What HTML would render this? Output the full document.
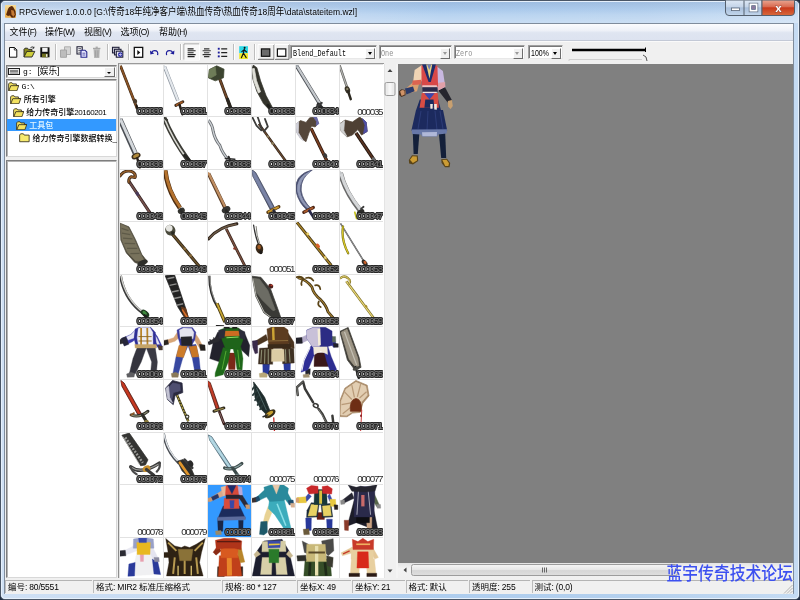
<!DOCTYPE html><html lang="zh"><head><meta charset="utf-8"><title>RPGViewer</title><style>
*{box-sizing:border-box;margin:0;padding:0}
html,body{width:800px;height:600px;overflow:hidden;background:#1e2c40}
body{will-change:transform;font-family:"Liberation Sans","Noto Sans CJK SC",sans-serif;font-size:9.4px;color:#000;position:relative}
.a{position:absolute}
#frame{left:0;top:0;width:800px;height:600px;background:linear-gradient(90deg,#cfe0f4 0%,#c3d8f1 30%,#aecdee 55%,#b4d0ee 80%,#c5dbf3 100%);border:1px solid #4a5666;border-radius:5px;}
#frame2{left:1px;top:1px;width:798px;height:598px;border:1px solid #e6f0fb;border-radius:4px}
#title{left:19px;top:5.7px;font-size:8.5px;white-space:nowrap;line-height:12px;color:#000;text-shadow:0 0 3px rgba(255,255,255,.7);transform-origin:0 78%;transform:scaleY(1.16)}
#client{left:4px;top:23px;width:790px;height:571px;background:#f0f0f0;border:1px solid #7f8c9c;border-bottom-color:#9aa7b6}
#menubar{left:5px;top:24px;width:788px;height:16.5px;background:linear-gradient(#fbfcfe 0%,#eef1f8 40%,#dfe5f1 55%,#dde3f0 100%);border-bottom:1px solid #c3c9d6}
.mi{top:26px;line-height:12px;font-size:9px;white-space:nowrap}
.mi .l{font-size:8.3px;letter-spacing:-.62px}
#toolbar{left:5px;top:41px;width:788px;height:22.5px;background:#f0f0f0;border-top:1px solid #fafafa}
.sep{top:44px;width:1px;height:16px;background:#bdbdbd;box-shadow:1px 0 0 #fff}
.combo{top:45px;height:14px;background:#fff;border:1px solid #a0a0a0;border-right-color:#e8e8e8;border-bottom-color:#e8e8e8;box-shadow:inset 1px 1px 0 #787878}
.combo .t{position:absolute;left:2.4px;top:1.5px;font-family:"Liberation Mono",monospace;font-size:8.2px;line-height:11px;white-space:nowrap;transform-origin:0 50%;transform:scaleX(.83)}
.combo .b{position:absolute;right:1px;top:2px;width:10px;height:10.5px;background:#f0f0f0;border:1px solid #fff;border-right-color:#6d6d6d;border-bottom-color:#6d6d6d}
.combo .b:after{content:"";position:absolute;left:1.5px;top:3px;border:2.6px solid transparent;border-top:3px solid #000;border-bottom:0}
.combo.dis .t{color:#8d8d8d;left:1.4px}
.combo.dis .b:after{border-top-color:#9a9a9a}
#gray{left:398px;top:64px;width:395px;height:499px;background:#808080}
.white{background:#fff;border:1px solid #828790}
#grid{left:118px;top:62.5px;width:265.5px;height:515px;background:#fff;overflow:hidden;border-top:1px solid #9a9a9a;border-left:1px solid #8e8e8e}
.cell{position:absolute;width:44px;height:52.53px;border-left:1px solid #e2e2e2;border-top:1px solid #e2e2e2;overflow:hidden}
.cell svg{position:absolute;left:0;top:0}
.lab{position:absolute;right:1.1px;bottom:0.6px;font-size:9.8px;line-height:9px;letter-spacing:-1.3px;white-space:nowrap;color:#2a2a2a}
.lab.o{right:1.5px;bottom:1px;color:#7c7c7c;text-shadow:-.8px 0 0 #262626,.8px 0 0 #262626,0 -.8px 0 #262626,0 .8px 0 #262626,-.6px -.6px 0 #262626,.6px .6px 0 #262626,.6px -.6px 0 #262626,-.6px .6px 0 #262626}
#vsb{left:383.5px;top:64px;width:12px;height:513.5px;background:#f0f0f0;border-left:1px solid #e4e4e4}
#hsb{left:398px;top:563px;width:395px;height:14px;background:linear-gradient(#e4e4e4,#f3f3f3 40%,#f0f0f0)}
#status{left:5px;top:578px;width:788px;height:16px;background:#f0f0f0}
.sp{top:579.5px;height:13.5px;line-height:12.5px;font-size:8.5px;white-space:nowrap;border-left:1px solid #bcbcbc;border-top:1px solid #b4b4b4;padding-left:2px}
.sp .l{letter-spacing:-.2px}
#wm{left:666.5px;top:560.5px;font-family:"Noto Sans CJK SC","WenQuanYi Zen Hei",sans-serif;font-weight:500;font-size:15.8px;line-height:22px;color:#3c50f0;white-space:nowrap;letter-spacing:0px;transform-origin:0 0;transform:scaleY(1.14)}
.tr{left:6.5px;height:12.9px;width:109.5px}
.tt{font-family:"Liberation Sans","Noto Sans CJK SC",sans-serif;font-weight:500;font-size:8px;line-height:12.5px;white-space:nowrap;top:1.3px}
.tt .l{letter-spacing:-.45px}
</style></head><body>
<div class="a" id="frame"></div><div class="a" id="frame2"></div><div class="a" style="left:2px;top:2px;width:796px;height:21px;background:linear-gradient(rgba(90,125,175,.22),rgba(120,160,210,.10) 35%,rgba(255,255,255,.12) 60%,rgba(255,255,255,.30))"></div>
<svg class="a" style="left:4.6px;top:5.3px" width="11.2" height="12.8" viewBox="0 0 11.2 12.8"><defs><linearGradient id="ic" x1="0" y1="0" x2="0" y2="1"><stop offset="0" stop-color="#f8dc98"/><stop offset="1" stop-color="#eaa944"/></linearGradient></defs><rect width="11.2" height="12.8" rx=".8" fill="url(#ic)"/><path d="M1.1 9.7 L3 4.1 L4.1 2.2 L6.4 1.1 L7.9 1.5 L10.5 6 L10.9 9.7 L9.7 12.4 L6.7 12.7 L4.9 10.5 L3 10.9Z" fill="#5c2a0a"/><path d="M6 5 L8.6 5.4 L9.8 9.6 L8.4 11.8 L6.6 9.6Z" fill="#c47a34"/></svg>
<div class="a" id="title">RPGViewer 1.0.0.0 [G:\传奇18年纯净客户端\热血传奇\热血传奇18周年\data\stateitem.wzl]</div>
<svg class="a" style="left:724px;top:0" width="72" height="17" viewBox="0 0 72 17"><defs><linearGradient id="gb" x1="0" y1="0" x2="0" y2="1"><stop offset="0" stop-color="#dfe9f5"/><stop offset=".45" stop-color="#c4d4e8"/><stop offset=".5" stop-color="#a9bfdb"/><stop offset="1" stop-color="#c2d6ec"/></linearGradient><linearGradient id="gr" x1="0" y1="0" x2="0" y2="1"><stop offset="0" stop-color="#e9a692"/><stop offset=".45" stop-color="#d9694f"/><stop offset=".5" stop-color="#c8391c"/><stop offset="1" stop-color="#d86a3c"/></linearGradient></defs><path d="M1.5 0 L1.5 12 Q1.5 15.5 5 15.5 L38 15.5 L38 0Z" fill="url(#gb)" stroke="#55606e" stroke-width="1"/><path d="M38 0 L38 15.5 L67 15.5 Q70.5 15.5 70.5 12 L70.5 0Z" fill="url(#gr)" stroke="#55606e" stroke-width="1"/><path d="M20 0.5 L20 15.5" stroke="#55606e" stroke-width="1"/><rect x="7.5" y="8" width="8" height="2.6" fill="#fff" stroke="#5a6678" stroke-width=".8"/><rect x="26.2" y="4.2" width="6.6" height="6.6" fill="none" stroke="#fff" stroke-width="1.8"/><rect x="25.1" y="3.1" width="8.8" height="8.8" fill="none" stroke="#5a6678" stroke-width=".6"/><rect x="27.7" y="5.7" width="3.6" height="3.6" fill="#8a7aa0" stroke="#5a6678" stroke-width=".6"/><text x="54.5" y="12" font-family="Liberation Sans,sans-serif" font-weight="bold" font-size="11.5" text-anchor="middle" fill="#fff" stroke="#6b3a3a" stroke-width=".5" paint-order="stroke">x</text></svg>
<div class="a" id="client"></div>
<div class="a" id="menubar"></div>
<div class="a mi" style="left:9.5px">文件<span class="l">(F)</span></div>
<div class="a mi" style="left:45px">操作<span class="l">(W)</span></div>
<div class="a mi" style="left:84px">视图<span class="l">(V)</span></div>
<div class="a mi" style="left:120.5px">选项<span class="l">(O)</span></div>
<div class="a mi" style="left:159px">帮助<span class="l">(H)</span></div>
<div class="a" id="toolbar"></div>
<svg class="a" style="left:0;top:40px" width="300" height="24" viewBox="0 40 300 24"><path d="M9.5 47.5 L14.5 47.5 L16.8 49.8 L16.8 57.2 L9.5 57.2Z" fill="#fff" stroke="#111" stroke-width="1"/><path d="M14.3 47.6 L14.3 50 L16.7 50" fill="none" stroke="#111" stroke-width=".8"/><path d="M24 57 L24 49.2 L25 48.2 L27.5 48.2 L28.5 49.4 L32 49.4 L32 51.2" fill="#8a8a1c" stroke="#222" stroke-width=".9"/><path d="M24 57 L26.8 51.4 L34.8 51.4 L32 57Z" fill="#cfcf3c" stroke="#222" stroke-width=".9"/><path d="M30.5 47.6 Q32.5 46 33.8 47.8 M33.9 46.6 L33.9 48.2 L32.4 48.2" fill="none" stroke="#111" stroke-width=".8"/><rect x="40.3" y="47.3" width="9.2" height="10" fill="#111"/><rect x="42.2" y="47.8" width="5.4" height="4" fill="#f4f4f4"/><rect x="42" y="53.6" width="5.8" height="3.7" fill="#6f6f1e"/><rect x="46" y="54.2" width="1.4" height="2.6" fill="#eee"/><path d="M64.5 46.8 L70.5 46.8 L70.5 54.5 L64.5 54.5Z" fill="#d4d4d4" stroke="#a8a8a8" stroke-width=".9"/><path d="M60.5 50 L66.5 50 L66.5 57.3 L60.5 57.3Z" fill="#bdbdbd" stroke="#a2a2a2" stroke-width=".9"/><path d="M77 46.8 L82.2 46.8 L82.2 54 L77 54Z" fill="#fff" stroke="#1a1a30" stroke-width="1.1"/><path d="M78.3 48.6 L81 48.6 M78.3 50.4 L81 50.4 M78.3 52.2 L81 52.2" stroke="#1a1a30" stroke-width=".7"/><path d="M81 50.2 L85 50.2 L86.8 52 L86.8 57.3 L81 57.3Z" fill="#e8e8ff" stroke="#26268c" stroke-width="1.1"/><path d="M82.4 53.2 L85.4 53.2 M82.4 55 L85.4 55" stroke="#26268c" stroke-width=".7"/><path d="M93.6 49.2 L99.8 49.2 L99.3 58 L94.1 58Z" fill="#b4b4b4"/><rect x="93" y="47.8" width="7.4" height="1.4" fill="#a6a6a6"/><rect x="95.6" y="46.6" width="2.2" height="1.3" fill="#a6a6a6"/><path d="M95.4 50.5 L95.6 57 M97.9 50.5 L97.8 57" stroke="#999" stroke-width=".7"/><rect x="112.5" y="47.3" width="6.5" height="5.6" fill="#cfcfd8" stroke="#20203a" stroke-width="1.1"/><rect x="114.5" y="49.3" width="6.5" height="5.6" fill="#dcdce6" stroke="#20203a" stroke-width="1.1"/><rect x="116.3" y="51.2" width="6.5" height="6" fill="#e8e8f4" stroke="#20203a" stroke-width="1.1"/><circle cx="120.2" cy="54.6" r="2.3" fill="#2a2aa8"/><path d="M118.8 54.6 L121.2 54.6 M120.3 53.6 L121.4 54.6 L120.3 55.6" stroke="#fff" stroke-width=".7" fill="none"/><rect x="134.3" y="47.4" width="8.4" height="9.9" fill="#fff" stroke="#111" stroke-width="1.3"/><path d="M137.3 49.9 L140.3 52.4 L137.3 54.9Z" fill="#111"/><path d="M157.6 55.2 Q158.6 50.6 154.6 50.6 Q152.6 50.6 151.8 52.4" fill="none" stroke="#1c1c9a" stroke-width="1.2"/><path d="M150 50.6 L150.4 54.6 L154.2 53.6Z" fill="#1c1c9a"/><path d="M166.6 55.2 Q165.6 50.6 169.6 50.6 Q171.6 50.6 172.6 52.4" fill="none" stroke="#1c1c9a" stroke-width="1.2"/><path d="M174.4 50.6 L174 54.6 L170.2 53.6Z" fill="#1c1c9a"/><path d="M184 59.5 L184 44 L199 44" fill="none" stroke="#9a9a9a" stroke-width="1"/><path d="M184.5 60 L199.5 60 L199.5 44.5" fill="none" stroke="#fff" stroke-width="1"/><rect x="184.5" y="44.5" width="14.5" height="15" fill="#f8f8f8"/><path d="M187.6 48.9 L193.6 48.9 M187.6 50.8 L195.6 50.8 M187.6 52.7 L193.6 52.7 M187.6 54.6 L195.6 54.6 M187.6 56.6 L194.6 56.6" stroke="#222" stroke-width="1.1"/><path d="M204 48.9 L209.4 48.9 M202.6 50.8 L210.8 50.8 M204 52.7 L209.4 52.7 M202.6 54.6 L210.8 54.6 M204 56.6 L209.4 56.6" stroke="#333" stroke-width="1.1"/><rect x="217.8" y="47.8" width="1.9" height="1.9" fill="#1c1c9a"/><rect x="217.8" y="51.6" width="1.9" height="1.9" fill="#1c1c9a"/><rect x="217.8" y="55.4" width="1.9" height="1.9" fill="#1c1c9a"/><path d="M221.2 48.8 L227.2 48.8 M221.2 52.6 L227.2 52.6 M221.2 56.4 L227.2 56.4" stroke="#222" stroke-width="1.2"/><rect x="239.2" y="46.2" width="8.8" height="7" fill="#2cd8e6"/><rect x="239.2" y="53.2" width="8.8" height="5.8" fill="#f0e92c"/><circle cx="244.6" cy="47.8" r="1" fill="#111"/><path d="M244.4 48.8 L243.4 53 L241.4 57.8 M243.4 53 L246.2 57.6 M244.2 49.8 L241.8 51.6 M244.2 49.8 L246.6 52" stroke="#111" stroke-width="1.1" fill="none" stroke-linecap="round"/><path d="M258 59.3 L274 59.3 L274 44.5" fill="none" stroke="#6a6a6a" stroke-width="1"/><path d="M258 59 L258 44.5 L274 44.5" fill="none" stroke="#fff" stroke-width="1"/><rect x="261.4" y="48.9" width="8.4" height="7.4" fill="#6b6b6b" stroke="#111" stroke-width="1.2"/><path d="M275 59.3 L289 59.3 L289 44.5" fill="none" stroke="#6a6a6a" stroke-width="1"/><path d="M275 59 L275 44.5 L289 44.5" fill="none" stroke="#fff" stroke-width="1"/><rect x="277.4" y="48.9" width="8.4" height="7.4" fill="#fff" stroke="#111" stroke-width="1.2"/></svg>
<div class="a sep" style="left:55px"></div>
<div class="a sep" style="left:107px"></div>
<div class="a sep" style="left:127.5px"></div>
<div class="a sep" style="left:180px"></div>
<div class="a sep" style="left:233px"></div>
<div class="a sep" style="left:254px"></div>
<div class="a combo" style="left:290px;width:87px"><span class="t">Blend_Default</span><span class="b"></span></div>
<div class="a combo dis" style="left:379px;width:73px"><span class="t">One</span><span class="b"></span></div>
<div class="a combo dis" style="left:453.5px;width:71px"><span class="t">Zero</span><span class="b"></span></div>
<div class="a combo" style="left:527.5px;width:35px"><span class="t" style="left:2px;font-family:'Liberation Sans',sans-serif;font-size:9.2px;transform:scaleX(.76)">100%</span><span class="b"></span></div>
<svg class="a" style="left:566px;top:44px" width="90" height="20" viewBox="0 0 90 20"><path d="M6 6 L79.5 6" stroke="#000" stroke-width="2.4"/><path d="M79.5 3.5 L79.5 8" stroke="#000" stroke-width="1"/><path d="M3 17 L3 15.5 L76 15.5" stroke="#d0d0d0" stroke-width="1" fill="none"/><path d="M77 11 Q81 12 81 17" stroke="#555" stroke-width="1" fill="none"/></svg>
<div class="a white" style="left:5.5px;top:65px;width:111px;height:13px;border-color:#7e7e7e #d8d8d8 #d8d8d8 #7e7e7e;box-shadow:inset 1px 1px 0 #b4b4b4"></div>
<svg class="a" style="left:8px;top:67px" width="14" height="9" viewBox="0 0 14 9"><rect x=".5" y="1.5" width="11" height="6" fill="#e8e8e8" stroke="#222" stroke-width="1"/><path d="M2 4 L10 4" stroke="#222" stroke-width="1"/><path d="M2 6 L10 6" stroke="#777" stroke-width="1"/></svg>
<div class="a" style="left:23px;top:66px;font-size:8.6px;line-height:11px;white-space:nowrap"><span style="font-family:'Liberation Mono',monospace;font-size:8px">g: </span>[娱乐]</div>
<div class="a" style="left:104px;top:67px;width:10.5px;height:10px;background:#f0f0f0;border:1px solid #fff;border-right-color:#6d6d6d;border-bottom-color:#6d6d6d"></div>
<div class="a" style="left:107px;top:71.5px;border:2.2px solid transparent;border-top:2.6px solid #000;border-bottom:0"></div>
<div class="a white" style="left:5.5px;top:78.5px;width:111.5px;height:78px;border-color:#7e7e7e #d8d8d8 #d8d8d8 #7e7e7e;box-shadow:inset 1px 1px 0 #b4b4b4"></div>
<div class="a tr" style="top:79.8px;"><svg class="a" style="left:1.3px;top:2px" width="11.4" height="9.6" viewBox="0 0 13 11"><path d="M0.7 2.2 L1.8 0.9 L4.6 0.9 L5.6 2.2 L9.6 2.2 L9.6 4 L12.3 4 L10.2 10 L0.7 10 Z" fill="#f3e260" stroke="#3a3420" stroke-width="1"/><path d="M0.9 10 L3.2 4.2 L12.2 4.2" fill="none" stroke="#3a3420" stroke-width="1"/></svg><div class="a tt" style="left:14.9px;font-family:Liberation Mono,monospace;font-size:8px;"><span class="l">G:\</span></div></div>
<div class="a tr" style="top:92.7px;"><svg class="a" style="left:3.7px;top:2px" width="11.4" height="9.6" viewBox="0 0 13 11"><path d="M0.7 2.2 L1.8 0.9 L4.6 0.9 L5.6 2.2 L9.6 2.2 L9.6 4 L12.3 4 L10.2 10 L0.7 10 Z" fill="#f3e260" stroke="#3a3420" stroke-width="1"/><path d="M0.9 10 L3.2 4.2 L12.2 4.2" fill="none" stroke="#3a3420" stroke-width="1"/></svg><div class="a tt" style="left:17.3px;">所有引擎</div></div>
<div class="a tr" style="top:105.6px;"><svg class="a" style="left:6.1px;top:2px" width="11.4" height="9.6" viewBox="0 0 13 11"><path d="M0.7 2.2 L1.8 0.9 L4.6 0.9 L5.6 2.2 L9.6 2.2 L9.6 4 L12.3 4 L10.2 10 L0.7 10 Z" fill="#f3e260" stroke="#3a3420" stroke-width="1"/><path d="M0.9 10 L3.2 4.2 L12.2 4.2" fill="none" stroke="#3a3420" stroke-width="1"/></svg><div class="a tt" style="left:19.7px;">给力传奇引擎<span class="l">20160201</span></div></div>
<div class="a tr" style="top:118.5px;background:#3399ff;"><svg class="a" style="left:9.1px;top:2px" width="11.4" height="9.6" viewBox="0 0 13 11"><path d="M0.7 2.2 L1.8 0.9 L4.6 0.9 L5.6 2.2 L9.6 2.2 L9.6 4 L12.3 4 L10.2 10 L0.7 10 Z" fill="#f3e260" stroke="#3a3420" stroke-width="1"/><path d="M0.9 10 L3.2 4.2 L12.2 4.2" fill="none" stroke="#3a3420" stroke-width="1"/></svg><div class="a tt" style="left:22.7px;color:#e4f6ff;">工具包</div></div>
<div class="a tr" style="top:131.4px;"><svg class="a" style="left:12.5px;top:2px" width="11.4" height="9.6" viewBox="0 0 13 11"><path d="M0.7 2.4 L1.8 0.9 L5 0.9 L6 2.4 L11.6 2.4 L11.6 10 L0.7 10 Z" fill="#f6ea6e" stroke="#3a3420" stroke-width="1"/></svg><div class="a tt" style="left:26.1px;">给力传奇引擎数据转换<span class="l">_</span></div></div>
<div class="a white" style="left:5.5px;top:159.5px;width:111.5px;height:418px;border-color:#7e7e7e #d8d8d8 #d8d8d8 #7e7e7e;box-shadow:inset 1px 1px 0 #b4b4b4"></div>
<div class="a" id="grid">
<div class="cell" style="left:0.30px;top:0.30px;">
<svg width="44.0" height="52.53" viewBox="0 0 240.0 286.5" style="left:-1px;top:-1px"><path d="M8 10 L100 245" stroke="#3a2412" stroke-width="14.9" stroke-linecap="butt" fill="none"/><path d="M8 10 L100 245" stroke="#8a5426" stroke-width="9.5" stroke-linecap="butt" fill="none"/><ellipse cx="88" cy="203" rx="11" ry="13" fill="#4a3c2c" transform="rotate(-20 88 203)"/><path d="M95 225 L104 256" stroke="#1e1812" stroke-width="10.8" stroke-linecap="round" fill="none"/></svg>
<span class="lab o">000030</span>
</div>
<div class="cell" style="left:44.30px;top:0.30px;">
<svg width="44.0" height="52.53" viewBox="0 0 240.0 286.5" style="left:-1px;top:-1px"><path d="M8 15 L81 200" stroke="#8e96a0" stroke-width="18.9" stroke-linecap="butt" fill="none"/><path d="M9 15 L82 200" stroke="#e4e8ec" stroke-width="12.2" stroke-linecap="butt" fill="none"/><path d="M2 5 L14 14 L4 20Z" fill="#cfd4da" stroke="#cfd4da" stroke-width="4" stroke-linejoin="round"/><path d="M70 226 L108 206" stroke="#3a2a1c" stroke-width="16.2" stroke-linecap="round" fill="none"/><path d="M74 224 L104 208" stroke="#a45a24" stroke-width="9.5" stroke-linecap="round" fill="none"/><path d="M90 222 L106 274" stroke="#2a2018" stroke-width="13.5" stroke-linecap="round" fill="none"/></svg>
<span class="lab o">000031</span>
</div>
<div class="cell" style="left:88.30px;top:0.30px;">
<svg width="44.0" height="52.53" viewBox="0 0 240.0 286.5" style="left:-1px;top:-1px"><path d="M68 78 L128 240" stroke="#2e2014" stroke-width="16.2" stroke-linecap="butt" fill="none"/><path d="M68 78 L128 240" stroke="#74492a" stroke-width="9.5" stroke-linecap="butt" fill="none"/><path d="M13 30 L53 10 L93 28 L90 75 L45 92 L8 76Z" fill="#3c4430" stroke="#3c4430" stroke-width="4" stroke-linejoin="round"/><path d="M13 32 L45 16 L50 60 L20 76 L9 72Z" fill="#6e7c58" stroke="#6e7c58" stroke-width="4" stroke-linejoin="round"/><path d="M112 192 L133 248" stroke="#2a2620" stroke-width="17.6" stroke-linecap="round" fill="none"/></svg>
<span class="lab o">000032</span>
</div>
<div class="cell" style="left:132.30px;top:0.30px;">
<svg width="44.0" height="52.53" viewBox="0 0 240.0 286.5" style="left:-1px;top:-1px"><path d="M12 6 L32 20 L52 92 L82 172 L116 236 L104 254 L68 216 L32 150 L10 82 L5 30Z" fill="#34342c" stroke="#34342c" stroke-width="4" stroke-linejoin="round"/><path d="M7 26 L18 24 L30 90 L52 152 L40 158 L14 90Z" fill="#e0e0d8" stroke="#e0e0d8" stroke-width="4" stroke-linejoin="round"/><path d="M92 225 L120 262" stroke="#1e1e1a" stroke-width="16.2" stroke-linecap="round" fill="none"/></svg>
<span class="lab o">000033</span>
</div>
<div class="cell" style="left:176.30px;top:0.30px;">
<svg width="44.0" height="52.53" viewBox="0 0 240.0 286.5" style="left:-1px;top:-1px"><path d="M8 10 L140 225" stroke="#4a4e54" stroke-width="20.2" stroke-linecap="butt" fill="none"/><path d="M9 9 L140 223" stroke="#c4c8cc" stroke-width="12.2" stroke-linecap="butt" fill="none"/><path d="M2 0 L16 10 L4 18Z" fill="#9aa0a6" stroke="#9aa0a6" stroke-width="4" stroke-linejoin="round"/><path d="M128 222 L156 252" stroke="#2c2c2c" stroke-width="21.6" stroke-linecap="round" fill="none"/><path d="M118 232 L146 212" stroke="#3a3a3a" stroke-width="10.8" stroke-linecap="round" fill="none"/></svg>
<span class="lab o">000034</span>
</div>
<div class="cell" style="left:220.30px;top:0.30px;">
<svg width="44.0" height="52.53" viewBox="0 0 240.0 286.5" style="left:-1px;top:-1px"><path d="M3 8 L42 122" stroke="#5a5a58" stroke-width="13.5" stroke-linecap="butt" fill="none"/><path d="M3 8 L42 122" stroke="#b4b4b0" stroke-width="6.8" stroke-linecap="butt" fill="none"/><ellipse cx="46" cy="140" rx="14" ry="20" fill="#3a3428" transform="rotate(-20 46 140)"/><ellipse cx="45" cy="136" rx="6" ry="7" fill="#8a8468"/><path d="M50 150 L64 192" stroke="#2c2820" stroke-width="13.5" stroke-linecap="round" fill="none"/></svg>
<span class="lab">000035</span>
</div>
<div class="cell" style="left:0.30px;top:52.83px;">
<svg width="44.0" height="52.53" viewBox="0 0 240.0 286.5" style="left:-1px;top:-1px"><path d="M5 18 L88 203" stroke="#4a4e54" stroke-width="28.4" stroke-linecap="butt" fill="none"/><path d="M8 18 L91 203" stroke="#d4d8dc" stroke-width="16.2" stroke-linecap="butt" fill="none"/><path d="M0 8 L14 16 L2 26Z" fill="#b0b4b8" stroke="#b0b4b8" stroke-width="4" stroke-linejoin="round"/><ellipse cx="93" cy="218" rx="26" ry="16" fill="#3a2c1c" transform="rotate(-25 93 218)"/><ellipse cx="93" cy="217" rx="18" ry="9" fill="#b08a3c" transform="rotate(-25 93 217)"/><path d="M100 232 L114 280" stroke="#2a2018" stroke-width="13.5" stroke-linecap="round" fill="none"/></svg>
<span class="lab o">000036</span>
</div>
<div class="cell" style="left:44.30px;top:52.83px;">
<svg width="44.0" height="52.53" viewBox="0 0 240.0 286.5" style="left:-1px;top:-1px"><path d="M6 10 Q50 120 140 245" stroke="#3c3c36" stroke-width="25.7" stroke-linecap="butt" stroke-linejoin="round" fill="none"/><path d="M8 14 Q50 122 132 236" stroke="#d8d8d2" stroke-width="8.1" stroke-linecap="butt" stroke-linejoin="round" fill="none"/><path d="M4 8 L22 22" stroke="#3c3c36" stroke-width="12.2" stroke-linecap="round" stroke-linejoin="round" fill="none"/><path d="M118 215 L150 250" stroke="#262622" stroke-width="17.6" stroke-linecap="round" fill="none"/></svg>
<span class="lab o">000037</span>
</div>
<div class="cell" style="left:88.30px;top:52.83px;">
<svg width="44.0" height="52.53" viewBox="0 0 240.0 286.5" style="left:-1px;top:-1px"><path d="M8 23 Q30 50 34 85 Q44 130 70 160 Q82 200 122 246" stroke="#6a6e72" stroke-width="16.2" stroke-linecap="butt" stroke-linejoin="round" fill="none"/><path d="M8 23 Q30 50 34 85 Q44 130 70 160 Q82 200 122 246" stroke="#d0d4d8" stroke-width="6.8" stroke-linecap="butt" stroke-linejoin="round" fill="none"/><path d="M100 232 L152 236" stroke="#2a2a2a" stroke-width="8.1" stroke-linecap="round" fill="none"/><path d="M118 222 L134 262" stroke="#2a2a2a" stroke-width="10.8" stroke-linecap="round" fill="none"/></svg>
<span class="lab o">000038</span>
</div>
<div class="cell" style="left:132.30px;top:52.83px;">
<svg width="44.0" height="52.53" viewBox="0 0 240.0 286.5" style="left:-1px;top:-1px"><path d="M43 43 L198 258" stroke="#2a1e16" stroke-width="13.5" stroke-linecap="butt" fill="none"/><path d="M43 43 L198 258" stroke="#6a4a30" stroke-width="6.8" stroke-linecap="butt" fill="none"/><path d="M8 8 L30 52 L56 78" stroke="#3c3c3a" stroke-width="9.5" stroke-linecap="round" stroke-linejoin="round" fill="none"/><path d="M36 4 L60 72" stroke="#3c3c3a" stroke-width="9.5" stroke-linecap="round" stroke-linejoin="round" fill="none"/><path d="M76 16 L92 58 L70 84" stroke="#3c3c3a" stroke-width="9.5" stroke-linecap="round" stroke-linejoin="round" fill="none"/><ellipse cx="118" cy="150" rx="8" ry="8" fill="#8a7a5a"/><ellipse cx="92" cy="112" rx="7" ry="7" fill="#8a7a5a"/></svg>
<span class="lab o">000039</span>
</div>
<div class="cell" style="left:176.30px;top:52.83px;">
<svg width="44.0" height="52.53" viewBox="0 0 240.0 286.5" style="left:-1px;top:-1px"><path d="M88 68 L173 243" stroke="#2a140c" stroke-width="17.6" stroke-linecap="butt" fill="none"/><path d="M88 68 L173 243" stroke="#7a4022" stroke-width="9.5" stroke-linecap="butt" fill="none"/><path d="M5 45 L30 25 L60 35 L80 10 L115 5 L128 40 L110 60 L90 55 L75 95 L60 140 L30 120 L10 90Z" fill="#54463a" stroke="#54463a" stroke-width="4" stroke-linejoin="round"/><path d="M3 45 L20 32 L18 90 L45 135 L28 122 L8 90Z" fill="#d0d0d8" stroke="#d0d0d8" stroke-width="4" stroke-linejoin="round"/><path d="M100 5 L118 6 L130 42 L116 52 L118 30Z" fill="#6a6aa8" stroke="#6a6aa8" stroke-width="4" stroke-linejoin="round"/><ellipse cx="165" cy="215" rx="14" ry="10" fill="#3a3a3a" transform="rotate(60 165 215)"/></svg>
<span class="lab o">000040</span>
</div>
<div class="cell" style="left:220.30px;top:52.83px;">
<svg width="44.0" height="52.53" viewBox="0 0 240.0 286.5" style="left:-1px;top:-1px"><path d="M93 93 L213 273" stroke="#1e140e" stroke-width="18.9" stroke-linecap="butt" fill="none"/><path d="M93 93 L213 273" stroke="#5a3422" stroke-width="9.5" stroke-linecap="butt" fill="none"/><path d="M3 43 L33 22 L73 33 L113 6 L148 33 L154 84 L123 104 L103 74 L73 104 L43 114 L12 84Z" fill="#4e4034" stroke="#4e4034" stroke-width="4" stroke-linejoin="round"/><path d="M3 45 L30 26 L26 80 L43 112 L12 84Z" fill="#d0d0d0" stroke="#d0d0d0" stroke-width="4" stroke-linejoin="round"/><path d="M128 14 L148 33 L154 84 L134 96 L142 50Z" fill="#4e4ea4" stroke="#4e4ea4" stroke-width="4" stroke-linejoin="round"/><ellipse cx="190" cy="238" rx="14" ry="9" fill="#6a6a6a" transform="rotate(55 190 238)"/></svg>
<span class="lab o">000041</span>
</div>
<div class="cell" style="left:0.30px;top:105.36px;">
<svg width="44.0" height="52.53" viewBox="0 0 240.0 286.5" style="left:-1px;top:-1px"><path d="M53 65 L173 245" stroke="#2c1c1c" stroke-width="16.2" stroke-linecap="butt" fill="none"/><path d="M53 65 L173 245" stroke="#74504c" stroke-width="9.5" stroke-linecap="butt" fill="none"/><path d="M6 38 Q26 6 64 12 Q94 22 88 46 L66 42 Q50 52 54 72" stroke="#3a2414" stroke-width="16.2" stroke-linecap="round" stroke-linejoin="round" fill="none"/><path d="M6 38 Q26 6 64 12 Q94 22 88 46 L66 42 Q50 52 54 72" stroke="#96602c" stroke-width="8.1" stroke-linecap="round" stroke-linejoin="round" fill="none"/><ellipse cx="100" cy="135" rx="9" ry="12" fill="#4a3a5a" transform="rotate(-30 100 135)"/></svg>
<span class="lab o">000042</span>
</div>
<div class="cell" style="left:44.30px;top:105.36px;">
<svg width="44.0" height="52.53" viewBox="0 0 240.0 286.5" style="left:-1px;top:-1px"><path d="M12 8 Q22 112 92 212" stroke="#4e2e12" stroke-width="25.7" stroke-linecap="butt" stroke-linejoin="round" fill="none"/><path d="M14 8 Q24 112 94 210" stroke="#b4722e" stroke-width="16.2" stroke-linecap="butt" stroke-linejoin="round" fill="none"/><ellipse cx="100" cy="228" rx="20" ry="16" fill="#34342f" transform="rotate(-30 100 228)"/><path d="M98 226 L116 262" stroke="#2a2a28" stroke-width="13.5" stroke-linecap="round" fill="none"/></svg>
<span class="lab o">000043</span>
</div>
<div class="cell" style="left:88.30px;top:105.36px;">
<svg width="44.0" height="52.53" viewBox="0 0 240.0 286.5" style="left:-1px;top:-1px"><path d="M8 25 L100 215" stroke="#5a3c24" stroke-width="20.2" stroke-linecap="butt" fill="none"/><path d="M10 25 L102 214" stroke="#c08e62" stroke-width="12.2" stroke-linecap="butt" fill="none"/><path d="M0 14 L16 24 L4 34Z" fill="#c08e62" stroke="#c08e62" stroke-width="4" stroke-linejoin="round"/><ellipse cx="104" cy="222" rx="25" ry="17" fill="#343432" transform="rotate(-30 104 222)"/><path d="M104 226 L122 254" stroke="#262624" stroke-width="13.5" stroke-linecap="round" fill="none"/></svg>
<span class="lab o">000044</span>
</div>
<div class="cell" style="left:132.30px;top:105.36px;">
<svg width="44.0" height="52.53" viewBox="0 0 240.0 286.5" style="left:-1px;top:-1px"><path d="M6 4 L26 20 L126 206 L104 220 L10 40Z" fill="#3c4258" stroke="#3c4258" stroke-width="4" stroke-linejoin="round"/><path d="M8 10 L22 22 L120 206 L108 214 L14 42Z" fill="#7a84a6" stroke="#7a84a6" stroke-width="4" stroke-linejoin="round"/><path d="M92 236 L152 206" stroke="#5a3c14" stroke-width="17.6" stroke-linecap="round" fill="none"/><path d="M96 234 L148 208" stroke="#c8962e" stroke-width="9.5" stroke-linecap="round" fill="none"/><path d="M124 226 L142 262" stroke="#2a2a3a" stroke-width="14.9" stroke-linecap="round" fill="none"/></svg>
<span class="lab o">000045</span>
</div>
<div class="cell" style="left:176.30px;top:105.36px;">
<svg width="44.0" height="52.53" viewBox="0 0 240.0 286.5" style="left:-1px;top:-1px"><path d="M96 4 Q-10 30 6 124 Q22 190 70 228 L86 214 Q42 170 34 120 Q26 50 96 4Z" fill="#4a5070" stroke="#4a5070" stroke-width="4" stroke-linejoin="round"/><path d="M84 14 Q6 44 14 122 Q28 184 74 218 L78 212 Q34 170 26 120 Q20 56 84 14Z" fill="#929ab8" stroke="#929ab8" stroke-width="4" stroke-linejoin="round"/><path d="M48 236 L100 210" stroke="#4a2414" stroke-width="17.6" stroke-linecap="round" fill="none"/><path d="M52 234 L96 212" stroke="#a85a2c" stroke-width="9.5" stroke-linecap="round" fill="none"/><path d="M78 228 L104 268" stroke="#2a2a4a" stroke-width="14.9" stroke-linecap="round" fill="none"/></svg>
<span class="lab o">000046</span>
</div>
<div class="cell" style="left:220.30px;top:105.36px;">
<svg width="44.0" height="52.53" viewBox="0 0 240.0 286.5" style="left:-1px;top:-1px"><path d="M8 20 Q30 120 118 230" stroke="#6a6a6a" stroke-width="27.0" stroke-linecap="butt" stroke-linejoin="round" fill="none"/><path d="M10 20 Q34 120 120 226" stroke="#d4d6d8" stroke-width="17.6" stroke-linecap="butt" stroke-linejoin="round" fill="none"/><path d="M0 8 L18 22 L4 30Z" fill="#c4c6c8" stroke="#c4c6c8" stroke-width="4" stroke-linejoin="round"/><ellipse cx="118" cy="236" rx="22" ry="14" fill="#2c2c2a" transform="rotate(-30 118 236)"/><path d="M86 236 L96 270" stroke="#c8c424" stroke-width="9.5" stroke-linecap="round" fill="none"/><path d="M120 218 L134 206" stroke="#3a3a3a" stroke-width="9.5" stroke-linecap="round" fill="none"/></svg>
<span class="lab o">000047</span>
</div>
<div class="cell" style="left:0.30px;top:157.89px;">
<svg width="44.0" height="52.53" viewBox="0 0 240.0 286.5" style="left:-1px;top:-1px"><path d="M6 12 L54 32 L90 102 L124 182 L156 224 L134 242 L86 226 L40 174 L10 104Z" fill="#4e4a3c" stroke="#4e4a3c" stroke-width="4" stroke-linejoin="round"/><path d="M10 18 L50 36 L84 104 L118 182 L140 220 L90 216 L46 170 L16 104Z" fill="#78725c" stroke="#78725c" stroke-width="4" stroke-linejoin="round"/><path d="M14 40 L52 52 M16 66 L62 74 M22 94 L74 98 M30 122 L88 124 M44 150 L100 150 M62 178 L112 176" stroke="#5e5a48" stroke-width="6.8" stroke-linecap="butt" stroke-linejoin="round" fill="none"/><ellipse cx="128" cy="228" rx="30" ry="14" fill="#2e2e2a" transform="rotate(-25 128 228)"/></svg>
<span class="lab o">000048</span>
</div>
<div class="cell" style="left:44.30px;top:157.89px;">
<svg width="44.0" height="52.53" viewBox="0 0 240.0 286.5" style="left:-1px;top:-1px"><path d="M48 68 L198 248" stroke="#2a2012" stroke-width="17.6" stroke-linecap="butt" fill="none"/><path d="M48 68 L198 248" stroke="#6a522c" stroke-width="9.5" stroke-linecap="butt" fill="none"/><ellipse cx="40" cy="50" rx="27" ry="30" fill="#4a4a3c" transform="rotate(-30 40 50)"/><ellipse cx="34" cy="40" rx="18" ry="18" fill="#e4e4e0"/><ellipse cx="54" cy="66" rx="10" ry="10" fill="#2a2a22"/><ellipse cx="118" cy="152" rx="8" ry="8" fill="#8a6a3a"/><ellipse cx="150" cy="190" rx="8" ry="8" fill="#8a6a3a"/></svg>
<span class="lab o">000049</span>
</div>
<div class="cell" style="left:88.30px;top:157.89px;">
<svg width="44.0" height="52.53" viewBox="0 0 240.0 286.5" style="left:-1px;top:-1px"><path d="M105 43 L208 248" stroke="#2e1e16" stroke-width="14.9" stroke-linecap="butt" fill="none"/><path d="M105 43 L208 248" stroke="#7a5040" stroke-width="8.1" stroke-linecap="butt" fill="none"/><path d="M8 98 Q66 30 163 15" stroke="#2e241c" stroke-width="16.2" stroke-linecap="round" stroke-linejoin="round" fill="none"/><path d="M12 94 Q68 32 158 18" stroke="#6e5a46" stroke-width="8.1" stroke-linecap="round" stroke-linejoin="round" fill="none"/><ellipse cx="150" cy="150" rx="7" ry="7" fill="#8a3a2a"/></svg>
<span class="lab o">000050</span>
</div>
<div class="cell" style="left:132.30px;top:157.89px;">
<svg width="44.0" height="52.53" viewBox="0 0 240.0 286.5" style="left:-1px;top:-1px"><path d="M14 22 Q22 80 42 132" stroke="#2e2e2e" stroke-width="6.8" stroke-linecap="round" stroke-linejoin="round" fill="none"/><path d="M28 30 Q30 80 46 120" stroke="#55554c" stroke-width="4.1" stroke-linecap="round" stroke-linejoin="round" fill="none"/><ellipse cx="46" cy="150" rx="20" ry="28" fill="#3a2a1a" transform="rotate(-15 46 150)"/><ellipse cx="44" cy="142" rx="10" ry="12" fill="#a05a24" transform="rotate(-15 44 142)"/><ellipse cx="54" cy="170" rx="9" ry="11" fill="#1e1a16"/></svg>
<span class="lab">000051</span>
</div>
<div class="cell" style="left:176.30px;top:157.89px;">
<svg width="44.0" height="52.53" viewBox="0 0 240.0 286.5" style="left:-1px;top:-1px"><path d="M11 8 L198 243" stroke="#3a2c10" stroke-width="16.2" stroke-linecap="butt" fill="none"/><path d="M11 8 L198 243" stroke="#a88428" stroke-width="8.1" stroke-linecap="butt" fill="none"/><ellipse cx="125" cy="135" rx="14" ry="9" fill="#d8602a" transform="rotate(50 125 135)"/><ellipse cx="70" cy="70" rx="9" ry="7" fill="#e8d070" transform="rotate(50 70 70)"/><ellipse cx="165" cy="200" rx="9" ry="7" fill="#e8d070" transform="rotate(50 165 200)"/></svg>
<span class="lab o">000052</span>
</div>
<div class="cell" style="left:220.30px;top:157.89px;">
<svg width="44.0" height="52.53" viewBox="0 0 240.0 286.5" style="left:-1px;top:-1px"><path d="M8 13 L153 248" stroke="#4a4a4a" stroke-width="8.1" stroke-linecap="butt" fill="none"/><path d="M8 13 L153 248" stroke="#b4b4b4" stroke-width="3.4" stroke-linecap="butt" fill="none"/><path d="M22 30 Q10 100 50 176" stroke="#6a6210" stroke-width="12.2" stroke-linecap="round" stroke-linejoin="round" fill="none"/><path d="M22 30 Q10 100 50 176" stroke="#d8c828" stroke-width="6.8" stroke-linecap="round" stroke-linejoin="round" fill="none"/><ellipse cx="140" cy="228" rx="20" ry="12" fill="#2e2a26" transform="rotate(50 140 228)"/><ellipse cx="142" cy="226" rx="10" ry="7" fill="#c8602a" transform="rotate(50 142 226)"/></svg>
<span class="lab o">000053</span>
</div>
<div class="cell" style="left:0.30px;top:210.42px;">
<svg width="44.0" height="52.53" viewBox="0 0 240.0 286.5" style="left:-1px;top:-1px"><path d="M8 10 Q30 140 132 214" stroke="#3a3a3a" stroke-width="16.2" stroke-linecap="butt" stroke-linejoin="round" fill="none"/><path d="M11 10 Q35 137 134 210" stroke="#d0d0cc" stroke-width="8.1" stroke-linecap="butt" stroke-linejoin="round" fill="none"/><ellipse cx="142" cy="216" rx="26" ry="16" fill="#1e3a1e" transform="rotate(40 142 216)"/><ellipse cx="140" cy="212" rx="14" ry="8" fill="#3e8a3e" transform="rotate(40 140 212)"/><path d="M140 226 L160 250" stroke="#1e1e1e" stroke-width="13.5" stroke-linecap="round" fill="none"/></svg>
<span class="lab o">000054</span>
</div>
<div class="cell" style="left:44.30px;top:210.42px;">
<svg width="44.0" height="52.53" viewBox="0 0 240.0 286.5" style="left:-1px;top:-1px"><path d="M12 10 L62 2 L124 188 L140 244 L118 238 L82 182Z" fill="#222222" stroke="#222222" stroke-width="4" stroke-linejoin="round"/><path d="M24 26 L62 18 M36 62 L74 54 M48 98 L86 90 M60 134 L98 126 M74 170 L110 162" stroke="#8e8e8c" stroke-width="8.1" stroke-linecap="butt" stroke-linejoin="round" fill="none"/><path d="M100 180 L124 188 L140 244 L118 238Z" fill="#6a3a1a" stroke="#6a3a1a" stroke-width="4" stroke-linejoin="round"/><path d="M106 196 L132 236" stroke="#d8702a" stroke-width="8.1" stroke-linecap="round" stroke-linejoin="round" fill="none"/></svg>
<span class="lab o">000055</span>
</div>
<div class="cell" style="left:88.30px;top:210.42px;">
<svg width="44.0" height="52.53" viewBox="0 0 240.0 286.5" style="left:-1px;top:-1px"><path d="M13 10 Q12 110 58 182" stroke="#2c2c2c" stroke-width="12.2" stroke-linecap="butt" stroke-linejoin="round" fill="none"/><path d="M16 10 Q16 108 60 176" stroke="#b4b4b0" stroke-width="4.1" stroke-linecap="butt" stroke-linejoin="round" fill="none"/><path d="M54 160 L98 262" stroke="#4a3a10" stroke-width="18.9" stroke-linecap="butt" fill="none"/><path d="M54 160 L98 262" stroke="#c8a834" stroke-width="9.5" stroke-linecap="butt" fill="none"/><path d="M52 282 L90 284" stroke="#1a1a1a" stroke-width="8.1" stroke-linecap="round" fill="none"/></svg>
<span class="lab o">000056</span>
</div>
<div class="cell" style="left:132.30px;top:210.42px;">
<svg width="44.0" height="52.53" viewBox="0 0 240.0 286.5" style="left:-1px;top:-1px"><path d="M6 12 L54 18 L106 80 L146 190 L168 254 L122 250 L70 212 L26 122Z" fill="#3a3a36" stroke="#3a3a36" stroke-width="4" stroke-linejoin="round"/><path d="M14 24 L46 28 L92 90 L132 196 L120 200 L60 140 L30 100Z" fill="#6c6c64" stroke="#6c6c64" stroke-width="4" stroke-linejoin="round"/><path d="M10 24 L28 118 L72 208 L122 246" stroke="#b8b8b0" stroke-width="5.4" stroke-linecap="butt" stroke-linejoin="round" fill="none"/><ellipse cx="108" cy="66" rx="14" ry="12" fill="#4a1e1a" transform="rotate(30 108 66)"/><ellipse cx="112" cy="62" rx="6" ry="5" fill="#b83a2a"/></svg>
<span class="lab o">000057</span>
</div>
<div class="cell" style="left:176.30px;top:210.42px;">
<svg width="44.0" height="52.53" viewBox="0 0 240.0 286.5" style="left:-1px;top:-1px"><path d="M20 22 Q60 30 92 70 Q100 110 140 140 Q170 170 180 206 L212 244" stroke="#3a2c10" stroke-width="14.9" stroke-linecap="round" stroke-linejoin="round" fill="none"/><path d="M20 22 Q60 30 92 70 Q100 110 140 140 Q170 170 180 206 L212 244" stroke="#a07c30" stroke-width="6.8" stroke-linecap="round" stroke-linejoin="round" fill="none"/><path d="M6 18 Q30 8 48 26 Q30 40 36 60" stroke="#5a4418" stroke-width="9.5" stroke-linecap="round" stroke-linejoin="round" fill="none"/><path d="M60 22 Q86 14 100 36" stroke="#5a4418" stroke-width="9.5" stroke-linecap="round" stroke-linejoin="round" fill="none"/><path d="M110 62 Q134 56 138 82" stroke="#5a4418" stroke-width="9.5" stroke-linecap="round" stroke-linejoin="round" fill="none"/><path d="M130 150 Q120 170 140 180" stroke="#5a4418" stroke-width="9.5" stroke-linecap="round" stroke-linejoin="round" fill="none"/></svg>
<span class="lab o">000058</span>
</div>
<div class="cell" style="left:220.30px;top:210.42px;">
<svg width="44.0" height="52.53" viewBox="0 0 240.0 286.5" style="left:-1px;top:-1px"><path d="M40 40 L193 246" stroke="#7a6a20" stroke-width="13.5" stroke-linecap="butt" fill="none"/><path d="M40 40 L193 246" stroke="#e8d878" stroke-width="6.8" stroke-linecap="butt" fill="none"/><path d="M8 22 Q30 4 50 24 Q66 34 56 52" stroke="#8a7a28" stroke-width="12.2" stroke-linecap="round" stroke-linejoin="round" fill="none"/><path d="M8 22 Q30 4 50 24 Q66 34 56 52" stroke="#e8d878" stroke-width="5.4" stroke-linecap="round" stroke-linejoin="round" fill="none"/><ellipse cx="148" cy="176" rx="9" ry="6" fill="#a89030" transform="rotate(50 148 176)"/></svg>
<span class="lab o">000059</span>
</div>
<div class="cell" style="left:0.30px;top:262.95px;">
<svg width="44.0" height="52.53" viewBox="0 0 240.0 286.5" style="left:-1px;top:-1px"><path d="M 100.2 114.8 L 149.4 117.8 L 121.2 195.8 L 88.2 261.8 L 57.0 255.8 L 76.2 177.8 Z" fill="#34343e" stroke="#34343e" stroke-width="2" stroke-linejoin="round"/><path d="M 148.2 117.8 L 197.4 116.6 L 209.4 195.8 L 203.4 261.8 L 172.2 255.8 L 178.2 195.8 Z" fill="#3a3a44" stroke="#3a3a44" stroke-width="2" stroke-linejoin="round"/><path d="M 41.4 261.8 L 65.4 252.2 L 85.8 259.4 L 82.2 278.6 L 45.0 279.8 Z" fill="#5e5e62" stroke="#5e5e62" stroke-width="2" stroke-linejoin="round"/><path d="M 171.0 255.8 L 208.2 257.0 L 211.8 277.4 L 172.2 276.2 Z" fill="#4a4a4e" stroke="#4a4a4e" stroke-width="2" stroke-linejoin="round"/><path d="M 94.2 15.8 L 64.2 45.8 L 15.0 68.6 L 29.4 108.2 L 77.4 83.0 L 101.4 57.8 Z" fill="#3c3cae" stroke="#3c3cae" stroke-width="2" stroke-linejoin="round"/><path d="M 88.2 24.2 L 65.4 48.2 L 40.2 60.2 L 49.8 77.0 L 82.2 65.0 Z" fill="#e8e8f4" stroke="#e8e8f4" stroke-width="2" stroke-linejoin="round"/><path d="M 12.6 67.4 L 37.8 57.8 L 53.4 99.8 L 28.2 109.4 Z" fill="#26263a" stroke="#26263a" stroke-width="2" stroke-linejoin="round"/><path d="M -0.6 74.6 L 16.2 71.0 L 24.6 93.8 L 6.6 98.6 Z" fill="#2a2a30" stroke="#2a2a30" stroke-width="2" stroke-linejoin="round"/><path d="M 183.0 21.8 L 209.4 57.8 L 235.8 111.8 L 221.4 127.4 L 196.2 99.8 L 177.0 63.8 Z" fill="#3434a4" stroke="#3434a4" stroke-width="2" stroke-linejoin="round"/><path d="M 189.0 39.8 L 205.8 63.8 L 221.4 99.8 L 208.2 99.8 L 189.0 69.8 Z" fill="#e4e4f0" stroke="#e4e4f0" stroke-width="2" stroke-linejoin="round"/><path d="M 213.0 105.8 L 237.0 110.6 L 237.0 131.0 L 217.8 131.0 Z" fill="#4a3a30" stroke="#4a3a30" stroke-width="2" stroke-linejoin="round"/><path d="M 88.2 15.8 L 118.2 3.8 L 172.2 6.2 L 197.4 33.8 L 203.4 101.0 L 178.2 119.0 L 94.2 115.4 L 82.2 69.8 Z" fill="#2e2e96" stroke="#2e2e96" stroke-width="2" stroke-linejoin="round"/><path d="M 105.0 13.4 L 121.8 6.2 L 168.6 8.6 L 184.2 33.8 L 185.4 105.8 L 106.2 105.8 L 99.0 63.8 Z" fill="#ececf4" stroke="#ececf4" stroke-width="2" stroke-linejoin="round"/><path d="M 120.6 11.0 L 120.6 105.8 M 154.2 11.0 L 155.4 105.8" stroke="#b8842a" stroke-width="9.6" stroke-linecap="butt" stroke-linejoin="round" fill="none"/><path d="M 106.2 57.8 L 178.2 57.8 M 106.2 81.8 L 178.2 81.8" stroke="#8a6420" stroke-width="4.8" stroke-linecap="butt" stroke-linejoin="round" fill="none"/><path d="M 85.8 101.0 L 203.4 101.0 L 204.6 120.2 L 88.2 120.2 Z" fill="#c4a468" stroke="#c4a468" stroke-width="2" stroke-linejoin="round"/></svg>
<span class="lab o">000060</span>
</div>
<div class="cell" style="left:44.30px;top:262.95px;">
<svg width="44.0" height="52.53" viewBox="0 0 240.0 286.5" style="left:-1px;top:-1px"><path d="M 94.2 93.8 L 137.4 105.8 L 107.4 177.8 L 83.4 261.8 L 54.6 255.8 L 70.2 171.8 Z" fill="#3848a0" stroke="#3848a0" stroke-width="2" stroke-linejoin="round"/><path d="M 136.2 105.8 L 179.4 99.8 L 197.4 177.8 L 203.4 237.8 L 172.2 243.8 L 160.2 177.8 Z" fill="#3444a0" stroke="#3444a0" stroke-width="2" stroke-linejoin="round"/><path d="M 87.0 105.8 L 131.4 109.4 L 112.2 171.8 L 72.6 165.8 Z" fill="#cc7c2a" stroke="#cc7c2a" stroke-width="2" stroke-linejoin="round"/><path d="M 142.2 111.8 L 183.0 108.2 L 195.0 168.2 L 159.0 170.6 Z" fill="#c87626" stroke="#c87626" stroke-width="2" stroke-linejoin="round"/><path d="M 45.0 259.4 L 70.2 252.2 L 85.8 261.8 L 82.2 279.8 L 48.6 279.8 Z" fill="#8a7a5a" stroke="#8a7a5a" stroke-width="2" stroke-linejoin="round"/><path d="M 172.2 237.8 L 204.6 236.6 L 209.4 261.8 L 178.2 263.0 Z" fill="#3a3a4a" stroke="#3a3a4a" stroke-width="2" stroke-linejoin="round"/><path d="M 82.2 27.8 L 58.2 63.8 L 4.2 81.8 L 10.2 101.0 L 65.4 83.0 L 95.4 57.8 Z" fill="#d8a678" stroke="#d8a678" stroke-width="2" stroke-linejoin="round"/><path d="M 0.6 79.4 L 25.8 74.6 L 30.6 99.8 L 5.4 104.6 Z" fill="#2a2420" stroke="#2a2420" stroke-width="2" stroke-linejoin="round"/><path d="M 172.2 33.8 L 196.2 69.8 L 220.2 117.8 L 203.4 126.2 L 178.2 87.8 L 163.8 57.8 Z" fill="#d4a274" stroke="#d4a274" stroke-width="2" stroke-linejoin="round"/><path d="M 198.6 99.8 L 228.6 103.4 L 231.0 133.4 L 204.6 133.4 Z" fill="#24201e" stroke="#24201e" stroke-width="2" stroke-linejoin="round"/><path d="M 76.2 21.8 L 106.2 6.2 L 160.2 8.6 L 179.4 33.8 L 173.4 75.8 L 155.4 107.0 L 94.2 101.0 L 82.2 63.8 Z" fill="#3a3a9a" stroke="#3a3a9a" stroke-width="2" stroke-linejoin="round"/><path d="M 89.4 21.8 L 112.2 11.0 L 155.4 13.4 L 168.6 35.0 L 163.8 69.8 L 94.2 67.4 Z" fill="#e4e4ee" stroke="#e4e4ee" stroke-width="2" stroke-linejoin="round"/><path d="M 97.8 60.2 L 156.6 57.8 L 159.0 108.2 L 101.4 107.0 Z" fill="#24242a" stroke="#24242a" stroke-width="2" stroke-linejoin="round"/></svg>
<span class="lab o">000061</span>
</div>
<div class="cell" style="left:88.30px;top:262.95px;">
<svg width="44.0" height="52.53" viewBox="0 0 240.0 286.5" style="left:-1px;top:-1px"><path d="M 58.2 33.8 L 34.2 87.8 L 15.0 177.8 L 70.2 197.0 L 94.2 123.8 L 178.2 121.4 L 227.4 168.2 L 233.4 105.8 L 203.4 33.8 Z" fill="#22222c" stroke="#22222c" stroke-width="2" stroke-linejoin="round"/><path d="M 112.2 147.8 L 155.4 147.8 L 153.0 237.8 L 118.2 237.8 Z" fill="#7a2818" stroke="#7a2818" stroke-width="2" stroke-linejoin="round"/><path d="M 88.2 117.8 L 127.8 123.8 L 115.8 195.8 L 88.2 265.4 L 43.8 277.4 L 45.0 255.8 L 65.4 195.8 Z" fill="#1f6a1a" stroke="#1f6a1a" stroke-width="2" stroke-linejoin="round"/><path d="M 142.2 121.4 L 185.4 115.4 L 196.2 177.8 L 191.4 240.2 L 163.8 237.8 L 155.4 177.8 Z" fill="#1e661a" stroke="#1e661a" stroke-width="2" stroke-linejoin="round"/><path d="M 103.8 135.8 L 82.2 237.8 M 167.4 129.8 L 178.2 225.8" stroke="#5cb038" stroke-width="4.8" stroke-linecap="butt" stroke-linejoin="round" fill="none"/><path d="M 60.6 55.4 L 4.2 87.8 L 10.2 103.4 L 70.2 81.8 Z" fill="#2a2a30" stroke="#2a2a30" stroke-width="2" stroke-linejoin="round"/><path d="M 6.6 93.8 L -4.2 87.8 M 22.2 87.8 L 16.2 73.4 M 40.2 79.4 L 36.6 63.8" stroke="#2a2a30" stroke-width="6.0" stroke-linecap="round" stroke-linejoin="round" fill="none"/><path d="M 69.0 21.8 L 100.2 9.8 L 172.2 11.0 L 198.6 33.8 L 196.2 75.8 L 178.2 125.0 L 101.4 125.0 L 82.2 75.8 Z" fill="#1f641a" stroke="#1f641a" stroke-width="2" stroke-linejoin="round"/><path d="M 97.8 27.8 L 173.4 27.8 L 178.2 53.0 L 94.2 55.4 Z" fill="#cc6c22" stroke="#cc6c22" stroke-width="2" stroke-linejoin="round"/><path d="M 63.0 24.2 L 100.2 15.8 L 94.2 63.8 L 64.2 69.8 Z" fill="#2c2c3a" stroke="#2c2c3a" stroke-width="2" stroke-linejoin="round"/><path d="M 172.2 15.8 L 205.8 31.4 L 208.2 73.4 L 181.8 67.4 Z" fill="#2c2c3a" stroke="#2c2c3a" stroke-width="2" stroke-linejoin="round"/><path d="M 106.2 63.8 L 172.2 60.2" stroke="#8ae060" stroke-width="6.0" stroke-linecap="butt" stroke-linejoin="round" fill="none"/><path d="M 88.2 -2.2 L 118.2 0.2 L 124.2 13.4 L 94.2 12.2 Z" fill="#1e1e1e" stroke="#1e1e1e" stroke-width="2" stroke-linejoin="round"/><path d="M 136.2 0.2 L 166.2 -2.2 L 163.8 12.2 L 139.8 13.4 Z" fill="#1e1e1e" stroke="#1e1e1e" stroke-width="2" stroke-linejoin="round"/></svg>
<span class="lab o">000062</span>
</div>
<div class="cell" style="left:132.30px;top:262.95px;">
<svg width="44.0" height="52.53" viewBox="0 0 240.0 286.5" style="left:-1px;top:-1px"><path d="M 64.2 207.8 L 101.4 207.8 L 97.8 261.8 L 65.4 261.8 Z" fill="#28389a" stroke="#28389a" stroke-width="2" stroke-linejoin="round"/><path d="M 178.2 201.8 L 215.4 199.4 L 214.2 249.8 L 181.8 252.2 Z" fill="#28389a" stroke="#28389a" stroke-width="2" stroke-linejoin="round"/><path d="M 45.0 259.4 L 70.2 253.4 L 89.4 261.8 L 87.0 279.8 L 47.4 279.8 Z" fill="#b8a878" stroke="#b8a878" stroke-width="2" stroke-linejoin="round"/><path d="M 46.2 121.4 L 120.6 117.8 L 118.2 209.0 L 40.2 207.8 Z" fill="#3e3022" stroke="#3e3022" stroke-width="2" stroke-linejoin="round"/><path d="M 58.2 129.8 L 53.4 201.8 M 76.2 127.4 L 73.8 205.4 M 94.2 125.0 L 94.2 207.8" stroke="#8c8c72" stroke-width="6.0" stroke-linecap="butt" stroke-linejoin="round" fill="none"/><path d="M 172.2 117.8 L 233.4 121.4 L 235.8 201.8 L 172.2 205.4 Z" fill="#3e3022" stroke="#3e3022" stroke-width="2" stroke-linejoin="round"/><path d="M 187.8 127.4 L 190.2 200.6 M 208.2 126.2 L 213.0 199.4" stroke="#8c8c72" stroke-width="6.0" stroke-linecap="butt" stroke-linejoin="round" fill="none"/><path d="M 112.2 127.4 L 179.4 127.4 L 181.8 192.2 L 111.0 193.4 Z" fill="#dccca4" stroke="#dccca4" stroke-width="2" stroke-linejoin="round"/><path d="M 82.2 45.8 L 16.2 87.8 L 10.2 104.6 L 40.2 103.4 L 91.8 75.8 Z" fill="#4a3420" stroke="#4a3420" stroke-width="2" stroke-linejoin="round"/><path d="M 6.6 81.8 L 35.4 78.2 L 36.6 147.8 L 22.2 151.4 L 10.2 117.8 Z" fill="#3a2a4a" stroke="#3a2a4a" stroke-width="2" stroke-linejoin="round"/><path d="M 199.8 33.8 L 233.4 87.8 L 235.8 121.4 L 214.2 117.8 L 190.2 69.8 Z" fill="#4a3420" stroke="#4a3420" stroke-width="2" stroke-linejoin="round"/><path d="M 87.0 15.8 L 118.2 3.8 L 178.2 3.8 L 202.2 21.8 L 204.6 105.8 L 196.2 121.4 L 100.2 121.4 L 91.8 69.8 Z" fill="#5c3c20" stroke="#5c3c20" stroke-width="2" stroke-linejoin="round"/><path d="M 120.6 7.4 L 123.0 77.0" stroke="#ccA434" stroke-width="13.2" stroke-linecap="butt" stroke-linejoin="round" fill="none"/><path d="M 91.8 101.0 L 215.4 98.6 L 216.6 120.2 L 93.0 121.4 Z" fill="#3a2a1a" stroke="#3a2a1a" stroke-width="2" stroke-linejoin="round"/><path d="M 94.2 81.8 L 202.2 79.4" stroke="#8a6a3a" stroke-width="6.0" stroke-linecap="butt" stroke-linejoin="round" fill="none"/></svg>
<span class="lab o">000063</span>
</div>
<div class="cell" style="left:176.30px;top:262.95px;">
<svg width="44.0" height="52.53" viewBox="0 0 240.0 286.5" style="left:-1px;top:-1px"><path d="M 57.0 237.8 L 83.4 233.0 L 82.2 264.2 L 58.2 265.4 Z" fill="#22222c" stroke="#22222c" stroke-width="2" stroke-linejoin="round"/><path d="M 43.8 265.4 L 76.2 260.6 L 78.6 279.8 L 46.2 281.0 Z" fill="#a09070" stroke="#a09070" stroke-width="2" stroke-linejoin="round"/><path d="M 106.2 147.8 L 178.2 145.4 L 184.2 221.0 L 103.8 221.0 Z" fill="#3a1818" stroke="#3a1818" stroke-width="2" stroke-linejoin="round"/><path d="M 88.2 105.8 L 52.2 177.8 L 33.0 252.2 L 71.4 239.0 L 101.4 167.0 L 120.6 137.0 Z" fill="#2e2e96" stroke="#2e2e96" stroke-width="2" stroke-linejoin="round"/><path d="M 82.2 117.8 L 48.6 189.8 L 37.8 243.8" stroke="#e8e8f0" stroke-width="6.0" stroke-linecap="butt" stroke-linejoin="round" fill="none"/><path d="M 178.2 105.8 L 197.4 165.8 L 227.4 237.8 L 197.4 263.0 L 172.2 191.0 L 159.0 141.8 Z" fill="#2c2c90" stroke="#2c2c90" stroke-width="2" stroke-linejoin="round"/><path d="M 99.0 87.8 L 173.4 87.8 L 178.2 155.0 L 139.8 135.8 L 103.8 157.4 Z" fill="#f0e8d8" stroke="#f0e8d8" stroke-width="2" stroke-linejoin="round"/><path d="M 70.2 45.8 L 7.8 74.6 L 6.6 93.8 L 34.2 95.0 L 82.2 71.0 Z" fill="#b4acc8" stroke="#b4acc8" stroke-width="2" stroke-linejoin="round"/><path d="M 3.0 65.0 L 37.8 62.6 L 40.2 93.8 L 6.6 95.0 Z" fill="#22222a" stroke="#22222a" stroke-width="2" stroke-linejoin="round"/><path d="M 196.2 45.8 L 233.4 111.8 L 209.4 116.6 L 184.2 75.8 Z" fill="#3030a0" stroke="#3030a0" stroke-width="2" stroke-linejoin="round"/><path d="M 189.0 57.8 L 221.4 57.8 L 222.6 89.0 L 191.4 89.0 Z" fill="#5a6a5c" stroke="#5a6a5c" stroke-width="2" stroke-linejoin="round"/><path d="M 208.2 93.8 L 235.8 96.2 L 235.8 116.6 L 211.8 116.6 Z" fill="#22222a" stroke="#22222a" stroke-width="2" stroke-linejoin="round"/><path d="M 64.2 21.8 L 100.2 7.4 L 166.2 7.4 L 202.2 27.8 L 202.2 105.8 L 178.2 111.8 L 94.2 111.8 L 65.4 69.8 Z" fill="#2c2c84" stroke="#2c2c84" stroke-width="2" stroke-linejoin="round"/><path d="M 65.4 23.0 L 100.2 8.6 L 136.2 8.6 L 133.8 111.8 L 94.2 111.8 L 65.4 69.8 Z" fill="#c8c0d8" stroke="#c8c0d8" stroke-width="2" stroke-linejoin="round"/><path d="M 130.2 15.8 L 133.8 105.8" stroke="#f4ecd8" stroke-width="14.4" stroke-linecap="butt" stroke-linejoin="round" fill="none"/></svg>
<span class="lab o">000064</span>
</div>
<div class="cell" style="left:220.30px;top:262.95px;">
<svg width="44.0" height="52.53" viewBox="0 0 240.0 286.5" style="left:-1px;top:-1px"><path d="M4 30 L50 8 L110 172 L120 226 L84 236 L46 186Z" fill="#3e3c36" stroke="#3e3c36" stroke-width="4" stroke-linejoin="round"/><path d="M12 34 L44 18 L102 174 L108 218 L90 224 L56 182Z" fill="#9c9484" stroke="#9c9484" stroke-width="4" stroke-linejoin="round"/><path d="M30 32 L96 212" stroke="#c4c0b4" stroke-width="6.8" stroke-linecap="butt" stroke-linejoin="round" fill="none"/><path d="M90 224 L108 284" stroke="#2a2a2a" stroke-width="12.2" stroke-linecap="round" fill="none"/><ellipse cx="94" cy="232" rx="20" ry="9" fill="#4a4a44" transform="rotate(-20 94 232)"/></svg>
<span class="lab o">000065</span>
</div>
<div class="cell" style="left:0.30px;top:315.48px;">
<svg width="44.0" height="52.53" viewBox="0 0 240.0 286.5" style="left:-1px;top:-1px"><path d="M10 8 L28 22 L124 192 L108 204 L16 40Z" fill="#4a120c" stroke="#4a120c" stroke-width="4" stroke-linejoin="round"/><path d="M13 14 L25 24 L118 192 L110 198 L20 40Z" fill="#c83a22" stroke="#c83a22" stroke-width="4" stroke-linejoin="round"/><path d="M66 196 Q110 214 158 176" stroke="#2e2e28" stroke-width="16.2" stroke-linecap="round" stroke-linejoin="round" fill="none"/><path d="M70 198 Q110 212 154 180" stroke="#8a8a70" stroke-width="6.8" stroke-linecap="round" stroke-linejoin="round" fill="none"/><path d="M128 196 L152 236" stroke="#2e2e28" stroke-width="17.6" stroke-linecap="round" fill="none"/><ellipse cx="150" cy="232" rx="12" ry="10" fill="#8a7a3a"/><path d="M66 196 L82 186" stroke="#8a5a2a" stroke-width="9.5" stroke-linecap="round" stroke-linejoin="round" fill="none"/></svg>
<span class="lab o">000066</span>
</div>
<div class="cell" style="left:44.30px;top:315.48px;">
<svg width="44.0" height="52.53" viewBox="0 0 240.0 286.5" style="left:-1px;top:-1px"><path d="M73 80 L138 230" stroke="#2e2a14" stroke-width="13.5" stroke-linecap="butt" fill="none"/><path d="M73 80 L138 230" stroke="#c8b850" stroke-width="6.8" stroke-linecap="butt" stroke-linejoin="round" fill="none"/><path d="M73 80 L138 230" stroke="#2e2a14" stroke-width="6.8" stroke-linecap="butt" stroke-dasharray="9 9" stroke-linejoin="round" fill="none"/><path d="M14 50 L52 8 L104 22 L108 74 L66 90 L56 140 L24 112Z" fill="#2a2a40" stroke="#2a2a40" stroke-width="4" stroke-linejoin="round"/><path d="M26 52 L54 22 L92 30 L94 64 L56 74 L48 112 L34 100Z" fill="#4e4e70" stroke="#4e4e70" stroke-width="4" stroke-linejoin="round"/><path d="M16 52 L30 40 L36 100 L52 130 L26 110Z" fill="#c4c4d4" stroke="#c4c4d4" stroke-width="4" stroke-linejoin="round"/><ellipse cx="132" cy="206" rx="12" ry="12" fill="#3a3a2a"/><ellipse cx="132" cy="206" rx="6" ry="6" fill="#f0f0f0"/></svg>
<span class="lab o">000067</span>
</div>
<div class="cell" style="left:88.30px;top:315.48px;">
<svg width="44.0" height="52.53" viewBox="0 0 240.0 286.5" style="left:-1px;top:-1px"><path d="M2 8 L18 20 L68 162 L52 170 L8 40Z" fill="#4a140c" stroke="#4a140c" stroke-width="4" stroke-linejoin="round"/><path d="M5 14 L15 22 L62 162 L56 166 L12 40Z" fill="#c8402a" stroke="#c8402a" stroke-width="4" stroke-linejoin="round"/><path d="M38 176 L92 158" stroke="#2e2a1c" stroke-width="16.2" stroke-linecap="round" fill="none"/><path d="M42 174 L88 160" stroke="#9a8a4a" stroke-width="6.8" stroke-linecap="round" fill="none"/><path d="M68 180 L93 245" stroke="#3a1e1a" stroke-width="14.9" stroke-linecap="round" fill="none"/><path d="M70 186 L90 238" stroke="#8a6a6a" stroke-width="5.4" stroke-linecap="round" fill="none"/></svg>
<span class="lab o">000068</span>
</div>
<div class="cell" style="left:132.30px;top:315.48px;">
<svg width="44.0" height="52.53" viewBox="0 0 240.0 286.5" style="left:-1px;top:-1px"><path d="M14 16 L38 48 L74 100 L106 180 L84 194 L52 162 L22 102Z" fill="#1e2c2c" stroke="#1e2c2c" stroke-width="4" stroke-linejoin="round"/><path d="M20 40 L6 58 M28 66 L10 88 M38 92 L22 116 M50 118 L36 142 M62 144 L50 166" stroke="#2a3a3a" stroke-width="9.5" stroke-linecap="round" stroke-linejoin="round" fill="none"/><path d="M30 50 L84 170" stroke="#4e6464" stroke-width="5.4" stroke-linecap="butt" stroke-linejoin="round" fill="none"/><ellipse cx="104" cy="190" rx="34" ry="18" fill="#3a3018" transform="rotate(-35 104 190)"/><ellipse cx="102" cy="188" rx="22" ry="9" fill="#c8a030" transform="rotate(-35 102 188)"/><path d="M124 212 L128 286" stroke="#c82a2a" stroke-width="6.8" stroke-linecap="round" fill="none"/><path d="M66 206 L92 196" stroke="#2a2a2a" stroke-width="8.1" stroke-linecap="round" fill="none"/></svg>
<span class="lab o">000069</span>
</div>
<div class="cell" style="left:176.30px;top:315.48px;">
<svg width="44.0" height="52.53" viewBox="0 0 240.0 286.5" style="left:-1px;top:-1px"><path d="M15 88 L10 46 L44 14 L54 52 L98 126" stroke="#3a3a38" stroke-width="13.5" stroke-linecap="round" stroke-linejoin="round" fill="none"/><path d="M15 88 L10 46 L44 14" stroke="#8a8a86" stroke-width="4.1" stroke-linecap="round" stroke-linejoin="round" fill="none"/><path d="M128 162 L150 192 L174 242 L210 250 L204 200" stroke="#3a3a38" stroke-width="13.5" stroke-linecap="round" stroke-linejoin="round" fill="none"/><ellipse cx="113" cy="145" rx="18" ry="14" fill="#3a3a38" transform="rotate(30 113 145)"/><ellipse cx="113" cy="145" rx="9" ry="6" fill="#fff" transform="rotate(30 113 145)"/><path d="M130 166 L172 238" stroke="#8a8a86" stroke-width="4.1" stroke-linecap="round" stroke-linejoin="round" fill="none"/></svg>
<span class="lab o">000070</span>
</div>
<div class="cell" style="left:220.30px;top:315.48px;">
<svg width="44.0" height="52.53" viewBox="0 0 240.0 286.5" style="left:-1px;top:-1px"><path d="M3 205 L4 120 L32 50 L92 8 L154 34 L164 92 L130 132 L116 182 L74 186 L44 206Z" fill="#a88a68" stroke="#a88a68" stroke-width="4" stroke-linejoin="round"/><path d="M10 196 L12 122 L38 56 L92 18 L146 40 L154 88 L122 126 L108 174 L72 178 L42 198Z" fill="#e2ceb2" stroke="#e2ceb2" stroke-width="4" stroke-linejoin="round"/><path d="M70 150 L20 190 M66 130 L14 140 M70 112 L30 70 M84 100 L70 34 M100 98 L118 28 M112 104 L150 70" stroke="#b89a78" stroke-width="6.8" stroke-linecap="butt" stroke-linejoin="round" fill="none"/><path d="M62 176 Q56 112 92 106 Q126 108 122 176Z" fill="#6e2e14" stroke="#6e2e14" stroke-width="4" stroke-linejoin="round"/><path d="M124 170 L118 282" stroke="#c83c3c" stroke-width="5.4" stroke-linecap="round" fill="none"/><ellipse cx="120" cy="200" rx="5" ry="7" fill="#8a2020"/></svg>
<span class="lab o">000071</span>
</div>
<div class="cell" style="left:0.30px;top:368.01px;">
<svg width="44.0" height="52.53" viewBox="0 0 240.0 286.5" style="left:-1px;top:-1px"><path d="M16 18 L56 6 L158 152 L144 180 L118 184Z" fill="#343432" stroke="#343432" stroke-width="4" stroke-linejoin="round"/><path d="M34 30 L130 168" stroke="#9a9a96" stroke-width="13.5" stroke-linecap="butt" stroke-dasharray="10 8" stroke-linejoin="round" fill="none"/><path d="M20 24 L112 178" stroke="#c4c4c0" stroke-width="4.1" stroke-linecap="butt" stroke-linejoin="round" fill="none"/><path d="M64 190 Q120 236 220 170" stroke="#3a3a3a" stroke-width="18.9" stroke-linecap="round" stroke-linejoin="round" fill="none"/><path d="M70 194 Q120 230 214 176" stroke="#9a9a96" stroke-width="6.8" stroke-linecap="round" stroke-linejoin="round" fill="none"/><ellipse cx="150" cy="200" rx="22" ry="16" fill="#c8902e" transform="rotate(-30 150 200)"/><path d="M150 205 L190 236" stroke="#3a3a3a" stroke-width="17.6" stroke-linecap="round" fill="none"/><path d="M62 188 Q70 216 96 230" stroke="#4a4a4a" stroke-width="12.2" stroke-linecap="round" stroke-linejoin="round" fill="none"/><path d="M222 172 Q226 198 206 216" stroke="#4a4a4a" stroke-width="12.2" stroke-linecap="round" stroke-linejoin="round" fill="none"/></svg>
<span class="lab o">000072</span>
</div>
<div class="cell" style="left:44.30px;top:368.01px;">
<svg width="44.0" height="52.53" viewBox="0 0 240.0 286.5" style="left:-1px;top:-1px"><path d="M3 8 Q16 104 88 172" stroke="#4a4e54" stroke-width="14.9" stroke-linecap="butt" stroke-linejoin="round" fill="none"/><path d="M5 8 Q20 102 90 168" stroke="#dde1e5" stroke-width="6.8" stroke-linecap="butt" stroke-linejoin="round" fill="none"/><path d="M78 160 L110 150 L150 190 L170 236 L140 248 L104 212Z" fill="#2e2e2c" stroke="#2e2e2c" stroke-width="4" stroke-linejoin="round"/><path d="M92 168 L140 236" stroke="#e0962c" stroke-width="14.9" stroke-linecap="round" stroke-linejoin="round" fill="none"/><path d="M118 150 L160 196" stroke="#3a3a3a" stroke-width="13.5" stroke-linecap="round" stroke-linejoin="round" fill="none"/><ellipse cx="150" cy="172" rx="14" ry="18" fill="#2a2a2a" transform="rotate(-30 150 172)"/></svg>
<span class="lab o">000073</span>
</div>
<div class="cell" style="left:88.30px;top:368.01px;">
<svg width="44.0" height="52.53" viewBox="0 0 240.0 286.5" style="left:-1px;top:-1px"><path d="M8 16 L26 26 L134 190 L116 200 L14 44Z" fill="#4e6a78" stroke="#4e6a78" stroke-width="4" stroke-linejoin="round"/><path d="M12 22 L24 30 L128 190 L120 194 L18 46Z" fill="#b4d8e4" stroke="#b4d8e4" stroke-width="4" stroke-linejoin="round"/><path d="M96 196 Q140 214 190 172" stroke="#3c4a4a" stroke-width="17.6" stroke-linecap="round" stroke-linejoin="round" fill="none"/><path d="M100 198 Q140 210 186 176" stroke="#8aa0a0" stroke-width="6.8" stroke-linecap="round" stroke-linejoin="round" fill="none"/><path d="M140 196 L172 244" stroke="#3c4a4a" stroke-width="17.6" stroke-linecap="round" fill="none"/><ellipse cx="166" cy="236" rx="12" ry="10" fill="#6a7a7a"/></svg>
<span class="lab o">000074</span>
</div>
<div class="cell" style="left:132.30px;top:368.01px;">
<span class="lab">000075</span>
</div>
<div class="cell" style="left:176.30px;top:368.01px;">
<span class="lab">000076</span>
</div>
<div class="cell" style="left:220.30px;top:368.01px;">
<span class="lab">000077</span>
</div>
<div class="cell" style="left:0.30px;top:420.54px;">
<span class="lab">000078</span>
</div>
<div class="cell" style="left:44.30px;top:420.54px;">
<span class="lab">000079</span>
</div>
<div class="cell" style="left:88.30px;top:420.54px;background:#3399ff;">
<svg width="44.0" height="52.53" viewBox="0 0 240.0 286.5" style="left:-1px;top:-1px"><path d="M 58.2 197.8 L 88.2 197.8 L 85.8 257.8 L 60.6 257.8 Z" fill="#1a2848" stroke="#1a2848" stroke-width="2" stroke-linejoin="round"/><path d="M 172.2 197.8 L 197.4 197.8 L 196.2 241.0 L 173.4 241.0 Z" fill="#1a2848" stroke="#1a2848" stroke-width="2" stroke-linejoin="round"/><path d="M 46.2 256.6 L 76.2 254.2 L 78.6 275.8 L 48.6 277.0 Z" fill="#9a8a6a" stroke="#9a8a6a" stroke-width="2" stroke-linejoin="round"/><path d="M 88.2 119.8 L 178.2 119.8 L 209.4 187.0 L 57.0 193.0 Z" fill="#1c2c5c" stroke="#1c2c5c" stroke-width="2" stroke-linejoin="round"/><path d="M 58.2 181.0 L 208.2 177.4 L 209.4 195.4 L 57.0 199.0 Z" fill="#5c6c9c" stroke="#5c6c9c" stroke-width="2" stroke-linejoin="round"/><path d="M 94.2 77.8 L 172.2 77.8 L 175.8 133.0 L 91.8 135.4 Z" fill="#d84c3c" stroke="#d84c3c" stroke-width="2" stroke-linejoin="round"/><path d="M 124.2 89.8 L 148.2 89.8 L 145.8 131.8 L 126.6 131.8 Z" fill="#3848a8" stroke="#3848a8" stroke-width="2" stroke-linejoin="round"/><path d="M 82.2 35.8 L 10.2 80.2 L 15.0 95.8 L 88.2 65.8 Z" fill="#d8a888" stroke="#d8a888" stroke-width="2" stroke-linejoin="round"/><path d="M 22.2 71.8 L 58.2 55.0 L 65.4 73.0 L 31.8 89.8 Z" fill="#283868" stroke="#283868" stroke-width="2" stroke-linejoin="round"/><path d="M 3.0 77.8 L 22.2 73.0 L 25.8 93.4 L 6.6 97.0 Z" fill="#c89870" stroke="#c89870" stroke-width="2" stroke-linejoin="round"/><path d="M 184.2 47.8 L 228.6 119.8 L 209.4 128.2 L 172.2 71.8 Z" fill="#2a2a3a" stroke="#2a2a3a" stroke-width="2" stroke-linejoin="round"/><path d="M 209.4 113.8 L 232.2 113.8 L 233.4 135.4 L 214.2 135.4 Z" fill="#c89870" stroke="#c89870" stroke-width="2" stroke-linejoin="round"/><path d="M 76.2 17.8 L 106.2 9.4 L 112.2 59.8 L 88.2 65.8 Z" fill="#e8b898" stroke="#e8b898" stroke-width="2" stroke-linejoin="round"/><path d="M 160.2 9.4 L 190.2 17.8 L 193.8 59.8 L 166.2 59.8 Z" fill="#b8a8d8" stroke="#b8a8d8" stroke-width="2" stroke-linejoin="round"/><path d="M 103.8 8.2 L 166.2 8.2 L 173.4 62.2 L 100.2 63.4 Z" fill="#d84a3a" stroke="#d84a3a" stroke-width="2" stroke-linejoin="round"/><path d="M 112.2 8.2 L 157.8 8.2 L 136.2 53.8 Z" fill="#1c2c6c" stroke="#1c2c6c" stroke-width="2" stroke-linejoin="round"/><path d="M 103.8 59.8 L 178.2 59.8 L 178.2 80.2 L 103.8 80.2 Z" fill="#2a2430" stroke="#2a2430" stroke-width="2" stroke-linejoin="round"/></svg>
<span class="lab o">000080</span>
</div>
<div class="cell" style="left:132.30px;top:420.54px;">
<svg width="44.0" height="52.53" viewBox="0 0 240.0 286.5" style="left:-1px;top:-1px"><path d="M 94.2 119.8 L 113.4 157.0 L 83.4 230.2 L 63.0 223.0 L 76.2 167.8 Z" fill="#e8d294" stroke="#e8d294" stroke-width="2" stroke-linejoin="round"/><path d="M 53.4 206.2 L 88.2 203.8 L 89.4 263.8 L 70.2 278.2 L 46.2 274.6 Z" fill="#1e5a6a" stroke="#1e5a6a" stroke-width="2" stroke-linejoin="round"/><path d="M 100.2 89.8 L 179.4 77.8 L 203.4 179.8 L 221.4 254.2 L 178.2 241.0 L 130.2 169.0 L 94.2 133.0 Z" fill="#3cacbc" stroke="#3cacbc" stroke-width="2" stroke-linejoin="round"/><path d="M 142.2 107.8 L 190.2 227.8" stroke="#8ae0e8" stroke-width="8.4" stroke-linecap="butt" stroke-linejoin="round" fill="none"/><path d="M 76.2 29.8 L 23.4 79.0 L 31.8 95.8 L 94.2 65.8 Z" fill="#2a8a9a" stroke="#2a8a9a" stroke-width="2" stroke-linejoin="round"/><path d="M 19.8 75.4 L 40.2 65.8 L 49.8 87.4 L 28.2 98.2 Z" fill="#1e4a6a" stroke="#1e4a6a" stroke-width="2" stroke-linejoin="round"/><path d="M 3.0 77.8 L 24.6 74.2 L 28.2 98.2 L 6.6 100.6 Z" fill="#3a3030" stroke="#3a3030" stroke-width="2" stroke-linejoin="round"/><path d="M 190.2 29.8 L 228.6 101.8 L 209.4 113.8 L 172.2 65.8 Z" fill="#2a8a9a" stroke="#2a8a9a" stroke-width="2" stroke-linejoin="round"/><path d="M 202.2 89.8 L 229.8 87.4 L 233.4 110.2 L 208.2 113.8 Z" fill="#1e4a6a" stroke="#1e4a6a" stroke-width="2" stroke-linejoin="round"/><path d="M 215.4 105.4 L 238.2 105.4 L 238.2 127.0 L 219.0 127.0 Z" fill="#d8b090" stroke="#d8b090" stroke-width="2" stroke-linejoin="round"/><path d="M 70.2 17.8 L 106.2 5.8 L 178.2 5.8 L 204.6 23.8 L 196.2 71.8 L 178.2 91.0 L 101.4 95.8 L 82.2 65.8 Z" fill="#2a8a9c" stroke="#2a8a9c" stroke-width="2" stroke-linejoin="round"/><path d="M 118.2 5.8 L 156.6 5.8 L 138.6 55.0 Z" fill="#e8c8a8" stroke="#e8c8a8" stroke-width="2" stroke-linejoin="round"/></svg>
<span class="lab o">000081</span>
</div>
<div class="cell" style="left:176.30px;top:420.54px;">
<svg width="44.0" height="52.53" viewBox="0 0 240.0 286.5" style="left:-1px;top:-1px"><path d="M 58.2 185.8 L 89.4 185.8 L 88.2 253.0 L 60.6 253.0 Z" fill="#28389a" stroke="#28389a" stroke-width="2" stroke-linejoin="round"/><path d="M 172.2 191.8 L 203.4 191.8 L 202.2 241.0 L 174.6 241.0 Z" fill="#28389a" stroke="#28389a" stroke-width="2" stroke-linejoin="round"/><path d="M 45.0 247.0 L 76.2 244.6 L 78.6 275.8 L 48.6 277.0 Z" fill="#6a5a3a" stroke="#6a5a3a" stroke-width="2" stroke-linejoin="round"/><path d="M 118.2 155.8 L 161.4 155.8 L 160.2 193.0 L 120.6 193.0 Z" fill="#6a1e14" stroke="#6a1e14" stroke-width="2" stroke-linejoin="round"/><path d="M 88.2 101.8 L 132.6 105.4 L 121.8 179.8 L 63.0 182.2 L 65.4 143.8 Z" fill="#1a2a3a" stroke="#1a2a3a" stroke-width="2" stroke-linejoin="round"/><path d="M 88.2 111.4 L 125.4 113.8 L 115.8 173.8 L 71.4 175.0 Z" fill="#e8d264" stroke="#e8d264" stroke-width="2" stroke-linejoin="round"/><path d="M 142.2 113.8 L 196.2 105.4 L 205.8 179.8 L 149.4 182.2 Z" fill="#1a2a3a" stroke="#1a2a3a" stroke-width="2" stroke-linejoin="round"/><path d="M 149.4 119.8 L 191.4 116.2 L 198.6 173.8 L 155.4 175.0 Z" fill="#e8d264" stroke="#e8d264" stroke-width="2" stroke-linejoin="round"/><path d="M 72.6 53.8 L 47.4 85.0 L 64.2 95.8 L 89.4 67.0 Z" fill="#3a4aa8" stroke="#3a4aa8" stroke-width="2" stroke-linejoin="round"/><path d="M 10.2 74.2 L 58.2 69.4 L 61.8 101.8 L 15.0 103.0 Z" fill="#e8c840" stroke="#e8c840" stroke-width="2" stroke-linejoin="round"/><path d="M 1.8 77.8 L 19.8 75.4 L 22.2 99.4 L 4.2 100.6 Z" fill="#d8a070" stroke="#d8a070" stroke-width="2" stroke-linejoin="round"/><path d="M 189.0 53.8 L 204.6 91.0 L 189.0 94.6 L 178.2 67.0 Z" fill="#3a4aa8" stroke="#3a4aa8" stroke-width="2" stroke-linejoin="round"/><path d="M 190.2 83.8 L 221.4 83.8 L 223.8 122.2 L 193.8 121.0 Z" fill="#e8c840" stroke="#e8c840" stroke-width="2" stroke-linejoin="round"/><path d="M 213.0 113.8 L 233.4 115.0 L 233.4 139.0 L 215.4 139.0 Z" fill="#2a2220" stroke="#2a2220" stroke-width="2" stroke-linejoin="round"/><path d="M 106.2 29.8 L 172.2 29.8 L 175.8 113.8 L 103.8 111.4 Z" fill="#183838" stroke="#183838" stroke-width="2" stroke-linejoin="round"/><path d="M 139.8 35.8 L 139.8 107.8" stroke="#d8c040" stroke-width="15.6" stroke-linecap="butt" stroke-linejoin="round" fill="none"/><path d="M 63.0 23.8 L 88.2 8.2 L 125.4 11.8 L 126.6 50.2 L 76.2 55.0 Z" fill="#c8282a" stroke="#c8282a" stroke-width="2" stroke-linejoin="round"/><path d="M 148.2 14.2 L 178.2 9.4 L 203.4 26.2 L 199.8 55.0 L 150.6 51.4 Z" fill="#c8282a" stroke="#c8282a" stroke-width="2" stroke-linejoin="round"/></svg>
<span class="lab o">000082</span>
</div>
<div class="cell" style="left:220.30px;top:420.54px;">
<svg width="44.0" height="52.53" viewBox="0 0 240.0 286.5" style="left:-1px;top:-1px"><path d="M 82.2 89.8 L 179.4 89.8 L 215.4 265.0 L 172.2 241.0 L 94.2 211.0 L 45.0 230.2 Z" fill="#1c1c28" stroke="#1c1c28" stroke-width="2" stroke-linejoin="round"/><path d="M 148.2 173.8 L 179.4 173.8 L 178.2 254.2 L 154.2 251.8 Z" fill="#c8a080" stroke="#c8a080" stroke-width="2" stroke-linejoin="round"/><path d="M 94.2 161.8 L 167.4 161.8 L 166.2 211.0 L 95.4 211.0 Z" fill="#0e0e12" stroke="#0e0e12" stroke-width="2" stroke-linejoin="round"/><path d="M 28.2 197.8 L 53.4 197.8 L 51.0 254.2 L 30.6 251.8 Z" fill="#8a3a2a" stroke="#8a3a2a" stroke-width="2" stroke-linejoin="round"/><path d="M 70.2 47.8 L 16.2 89.8 L 22.2 106.6 L 82.2 77.8 Z" fill="#262632" stroke="#262632" stroke-width="2" stroke-linejoin="round"/><path d="M 7.8 89.8 L 29.4 86.2 L 31.8 109.0 L 10.2 111.4 Z" fill="#8a8a8a" stroke="#8a8a8a" stroke-width="2" stroke-linejoin="round"/><path d="M 190.2 47.8 L 222.6 119.8 L 204.6 123.4 L 178.2 77.8 Z" fill="#56664a" stroke="#56664a" stroke-width="2" stroke-linejoin="round"/><path d="M 204.6 111.4 L 226.2 111.4 L 227.4 131.8 L 208.2 131.8 Z" fill="#8a8a8a" stroke="#8a8a8a" stroke-width="2" stroke-linejoin="round"/><path d="M 82.2 23.8 L 118.2 14.2 L 166.2 14.2 L 196.2 26.2 L 190.2 179.8 L 82.2 179.8 Z" fill="#2a2a4a" stroke="#2a2a4a" stroke-width="2" stroke-linejoin="round"/><path d="M 130.2 59.8 L 130.2 122.2" stroke="#c86a6a" stroke-width="18.0" stroke-linecap="butt" stroke-linejoin="round" fill="none"/><path d="M 106.2 35.8 L 97.8 167.8 M 159.0 35.8 L 172.2 167.8" stroke="#e8e8f0" stroke-width="3.6" stroke-linecap="butt" stroke-linejoin="round" fill="none"/><path d="M 49.8 5.8 L 94.2 17.8 L 118.2 11.8 L 142.2 17.8 L 166.2 11.8 L 208.2 3.4 L 196.2 38.2 L 142.2 44.2 L 70.2 39.4 Z" fill="#24242e" stroke="#24242e" stroke-width="2" stroke-linejoin="round"/></svg>
<span class="lab o">000083</span>
</div>
<div class="cell" style="left:0.30px;top:473.07px;">
<svg width="44.0" height="52.53" viewBox="0 0 240.0 286.5" style="left:-1px;top:-1px"><path d="M 97.2 84.6 L 178.2 84.6 L 207.0 183.6 L 225.0 203.4 L 52.2 212.4 L 79.2 165.6 Z" fill="#f0f0f2" stroke="#f0f0f2" stroke-width="2" stroke-linejoin="round"/><path d="M 54.0 147.6 L 88.2 138.6 L 84.6 212.4 L 48.6 214.2 Z" fill="#2a3a9a" stroke="#2a3a9a" stroke-width="2" stroke-linejoin="round"/><path d="M 181.8 120.6 L 210.6 129.6 L 226.8 205.2 L 190.8 201.6 Z" fill="#2a3a9a" stroke="#2a3a9a" stroke-width="2" stroke-linejoin="round"/><path d="M 115.2 84.6 L 135.0 84.6 L 133.2 133.2 L 117.0 133.2 Z" fill="#e8a0b0" stroke="#e8a0b0" stroke-width="2" stroke-linejoin="round"/><path d="M 88.2 45.0 L 18.0 79.2 L 25.2 102.6 L 99.0 75.6 Z" fill="#e8e8f2" stroke="#e8e8f2" stroke-width="2" stroke-linejoin="round"/><path d="M 1.8 75.6 L 34.2 72.0 L 37.8 102.6 L 5.4 104.4 Z" fill="#2a2a32" stroke="#2a2a32" stroke-width="2" stroke-linejoin="round"/><path d="M 178.2 45.0 L 216.0 120.6 L 190.8 126.0 L 160.2 75.6 Z" fill="#e4e4f0" stroke="#e4e4f0" stroke-width="2" stroke-linejoin="round"/><path d="M 190.8 111.6 L 217.8 111.6 L 219.6 135.0 L 194.4 135.0 Z" fill="#8a8aa0" stroke="#8a8aa0" stroke-width="2" stroke-linejoin="round"/><path d="M 79.2 10.8 L 133.2 1.8 L 187.2 10.8 L 190.8 61.2 L 77.4 61.2 Z" fill="#98a0c8" stroke="#98a0c8" stroke-width="2" stroke-linejoin="round"/><path d="M 97.2 30.6 L 171.0 30.6 L 169.2 95.4 L 99.0 95.4 Z" fill="#e8b820" stroke="#e8b820" stroke-width="2" stroke-linejoin="round"/><path d="M 106.2 1.8 L 151.2 1.8 L 149.4 30.6 L 109.8 30.6 Z" fill="#3a4aa8" stroke="#3a4aa8" stroke-width="2" stroke-linejoin="round"/></svg>
</div>
<div class="cell" style="left:44.30px;top:473.07px;">
<svg width="44.0" height="52.53" viewBox="0 0 240.0 286.5" style="left:-1px;top:-1px"><path d="M 14.7 8.1 L 64.2 48.6 L 100.2 57.6 L 118.2 48.6 L 145.2 57.6 L 181.2 39.6 L 230.7 8.1 L 210.0 84.6 L 199.2 138.6 L 219.0 212.4 L 19.2 212.4 L 32.7 138.6 L 28.2 84.6 Z" fill="#2e2214" stroke="#2e2214" stroke-width="2" stroke-linejoin="round"/><path d="M 28.2 30.6 L 73.2 75.6 M 217.2 30.6 L 172.2 75.6 M 64.2 111.6 L 55.2 201.6 M 181.2 111.6 L 190.2 201.6 M 118.2 75.6 L 118.2 201.6" stroke="#b89a50" stroke-width="10.8" stroke-linecap="butt" stroke-linejoin="round" fill="none"/><path d="M 82.2 66.6 L 163.2 66.6 L 154.2 129.6 L 91.2 129.6 Z" fill="#8a7238" stroke="#8a7238" stroke-width="2" stroke-linejoin="round"/><path d="M 1.2 84.6 L 31.8 82.8 L 33.6 111.6 L 4.8 111.6 Z" fill="#2e2214" stroke="#2e2214" stroke-width="2" stroke-linejoin="round"/><path d="M 82.2 156.6 L 82.2 210.6 M 154.2 156.6 L 154.2 210.6" stroke="#d8c070" stroke-width="7.2" stroke-linecap="butt" stroke-linejoin="round" fill="none"/></svg>
</div>
<div class="cell" style="left:88.30px;top:473.07px;">
<svg width="44.0" height="52.53" viewBox="0 0 240.0 286.5" style="left:-1px;top:-1px"><path d="M 58.2 162.0 L 96.0 162.0 L 94.2 216.0 L 56.4 216.0 Z" fill="#2a1a14" stroke="#2a1a14" stroke-width="2" stroke-linejoin="round"/><path d="M 164.4 162.0 L 195.0 162.0 L 195.0 212.4 L 166.2 212.4 Z" fill="#2a1a14" stroke="#2a1a14" stroke-width="2" stroke-linejoin="round"/><path d="M 67.2 102.6 L 177.0 99.0 L 189.6 212.4 L 61.8 214.2 Z" fill="#c0401a" stroke="#c0401a" stroke-width="2" stroke-linejoin="round"/><path d="M 121.2 111.6 L 123.0 210.6" stroke="#e8862a" stroke-width="27.0" stroke-linecap="butt" stroke-linejoin="round" fill="none"/><path d="M 58.2 48.6 L 33.0 82.8 L 49.2 99.0 L 78.0 75.6 Z" fill="#8a2a14" stroke="#8a2a14" stroke-width="2" stroke-linejoin="round"/><path d="M 184.2 48.6 L 205.8 136.8 L 182.4 140.4 L 162.6 75.6 Z" fill="#b8862a" stroke="#b8862a" stroke-width="2" stroke-linejoin="round"/><path d="M 74.4 36.0 L 169.8 36.0 L 168.0 113.4 L 76.2 113.4 Z" fill="#d85a20" stroke="#d85a20" stroke-width="2" stroke-linejoin="round"/><path d="M 45.6 18.0 L 94.2 7.2 L 148.2 7.2 L 189.6 21.6 L 186.0 70.2 L 148.2 61.2 L 94.2 61.2 L 51.0 68.4 Z" fill="#b0341a" stroke="#b0341a" stroke-width="2" stroke-linejoin="round"/><path d="M 54.6 25.2 L 184.2 25.2" stroke="#5a1a10" stroke-width="7.2" stroke-linecap="butt" stroke-linejoin="round" fill="none"/></svg>
</div>
<div class="cell" style="left:132.30px;top:473.07px;">
<svg width="44.0" height="52.53" viewBox="0 0 240.0 286.5" style="left:-1px;top:-1px"><path d="M 34.2 75.6 L 70.2 21.6 L 169.2 12.6 L 207.0 75.6 L 237.6 212.4 L 7.2 212.4 Z" fill="#1c1e2e" stroke="#1c1e2e" stroke-width="2" stroke-linejoin="round"/><path d="M 61.2 111.6 L 115.2 111.6 L 111.6 205.2 L 52.2 205.2 Z" fill="#d8d0a8" stroke="#d8d0a8" stroke-width="2" stroke-linejoin="round"/><path d="M 133.2 111.6 L 187.2 111.6 L 198.0 205.2 L 138.6 205.2 Z" fill="#d8d0a8" stroke="#d8d0a8" stroke-width="2" stroke-linejoin="round"/><path d="M 61.2 25.2 L 187.2 21.6 L 190.8 79.2 L 59.4 81.0 Z" fill="#d4cca4" stroke="#d4cca4" stroke-width="2" stroke-linejoin="round"/><path d="M 91.8 21.6 L 160.2 19.8 L 158.4 57.6 L 93.6 59.4 Z" fill="#3a4aa8" stroke="#3a4aa8" stroke-width="2" stroke-linejoin="round"/><path d="M 97.2 41.4 L 156.6 39.6" stroke="#e8c840" stroke-width="9.0" stroke-linecap="butt" stroke-linejoin="round" fill="none"/><path d="M 97.2 66.6 L 153.0 66.6 L 151.2 140.4 L 99.0 140.4 Z" fill="#2a7a2a" stroke="#2a7a2a" stroke-width="2" stroke-linejoin="round"/><path d="M 34.2 75.6 L 16.2 93.6 L 25.2 111.6 L 52.2 93.6 Z" fill="#c8b890" stroke="#c8b890" stroke-width="2" stroke-linejoin="round"/><path d="M 207.0 75.6 L 228.6 102.6 L 214.2 115.2 L 192.6 93.6 Z" fill="#c8b890" stroke="#c8b890" stroke-width="2" stroke-linejoin="round"/></svg>
</div>
<div class="cell" style="left:176.30px;top:473.07px;">
<svg width="44.0" height="52.53" viewBox="0 0 240.0 286.5" style="left:-1px;top:-1px"><path d="M 145.2 21.6 L 208.2 9.0 L 211.8 75.6 L 181.2 102.6 L 154.2 75.6 Z" fill="#4a4a48" stroke="#4a4a48" stroke-width="2" stroke-linejoin="round"/><path d="M 39.0 21.6 L 73.2 39.6 L 78.6 93.6 L 51.6 84.6 Z" fill="#4a4a48" stroke="#4a4a48" stroke-width="2" stroke-linejoin="round"/><path d="M 55.2 120.6 L 192.0 120.6 L 199.2 212.4 L 48.0 212.4 Z" fill="#364e28" stroke="#364e28" stroke-width="2" stroke-linejoin="round"/><path d="M 82.2 138.6 L 78.6 210.6 M 163.2 138.6 L 170.4 210.6" stroke="#1e2a18" stroke-width="14.4" stroke-linecap="butt" stroke-linejoin="round" fill="none"/><path d="M 64.2 39.6 L 165.0 39.6 L 172.2 133.2 L 60.6 133.2 Z" fill="#c8b878" stroke="#c8b878" stroke-width="2" stroke-linejoin="round"/><path d="M 118.2 48.6 L 118.2 210.6" stroke="#e8e0b0" stroke-width="18.0" stroke-linecap="butt" stroke-linejoin="round" fill="none"/><path d="M 73.2 84.6 L 163.2 84.6" stroke="#5a4a2a" stroke-width="10.8" stroke-linecap="butt" stroke-linejoin="round" fill="none"/><path d="M 10.2 102.6 L 58.8 99.0 L 60.6 129.6 L 13.8 131.4 Z" fill="#2e2e2a" stroke="#2e2e2a" stroke-width="2" stroke-linejoin="round"/><path d="M 172.2 102.6 L 208.2 111.6 L 204.6 165.6 L 175.8 156.6 Z" fill="#3a3a30" stroke="#3a3a30" stroke-width="2" stroke-linejoin="round"/></svg>
</div>
<div class="cell" style="left:220.30px;top:473.07px;">
<svg width="44.0" height="52.53" viewBox="0 0 240.0 286.5" style="left:-1px;top:-1px"><path d="M 67.2 120.6 L 114.0 120.6 L 108.6 205.2 L 61.8 205.2 Z" fill="#e8d0a0" stroke="#e8d0a0" stroke-width="2" stroke-linejoin="round"/><path d="M 148.2 120.6 L 193.2 120.6 L 202.2 205.2 L 153.6 205.2 Z" fill="#e8d0a0" stroke="#e8d0a0" stroke-width="2" stroke-linejoin="round"/><path d="M 54.6 198.0 L 112.2 198.0 L 112.2 216.0 L 54.6 216.0 Z" fill="#2a1a14" stroke="#2a1a14" stroke-width="2" stroke-linejoin="round"/><path d="M 151.8 198.0 L 205.8 198.0 L 205.8 216.0 L 151.8 216.0 Z" fill="#2a1a14" stroke="#2a1a14" stroke-width="2" stroke-linejoin="round"/><path d="M 69.0 57.6 L 11.4 86.4 L 18.6 102.6 L 79.8 84.6 Z" fill="#e4c898" stroke="#e4c898" stroke-width="2" stroke-linejoin="round"/><path d="M 22.2 91.8 L 58.2 75.6" stroke="#c83a2a" stroke-width="7.2" stroke-linecap="butt" stroke-linejoin="round" fill="none"/><path d="M 184.2 57.6 L 214.8 111.6 L 195.0 120.6 L 168.0 79.2 Z" fill="#e4c898" stroke="#e4c898" stroke-width="2" stroke-linejoin="round"/><path d="M 67.2 55.8 L 186.0 55.8 L 187.8 120.6 L 65.4 120.6 Z" fill="#e8d0a0" stroke="#e8d0a0" stroke-width="2" stroke-linejoin="round"/><path d="M 101.4 81.0 L 159.0 81.0 L 162.6 169.2 L 97.8 169.2 Z" fill="#d82a1a" stroke="#d82a1a" stroke-width="2" stroke-linejoin="round"/><path d="M 72.6 12.6 L 103.2 25.2 L 130.2 7.2 L 157.2 25.2 L 189.6 12.6 L 187.8 68.4 L 76.2 68.4 Z" fill="#c83a2a" stroke="#c83a2a" stroke-width="2" stroke-linejoin="round"/><path d="M 94.2 39.6 L 169.8 39.6" stroke="#f0b060" stroke-width="9.0" stroke-linecap="butt" stroke-linejoin="round" fill="none"/></svg>
</div>
</div>
<div class="a" id="vsb"></div>
<svg class="a" style="left:384px;top:64px" width="12" height="514" viewBox="0 0 12 514"><path d="M3.5 8 L6 5 L8.5 8Z" fill="#444"/><path d="M3.5 505.5 L6 508.5 L8.5 505.5Z" fill="#444"/><rect x="1" y="18.5" width="10" height="13" rx="1.5" fill="#ececec" stroke="#9a9a9a" stroke-width="1"/><path d="M6 19 L6 31" stroke="#fff" stroke-width="3" opacity=".6"/></svg>
<div class="a" style="left:395.5px;top:64px;width:2.5px;height:514px;background:#f4f4f4"></div>
<div class="a" id="gray"></div>
<svg class="a" style="left:395px;top:60px" width="65" height="112" viewBox="395 60 65 112"><path d="M 412.8 133.0 L 419.4 133.0 L 417.8 154.0 L 413.6 154.0 Z" fill="#14203a"/><path d="M 438.8 133.0 L 445.2 133.0 L 446.2 158.0 L 441.2 158.0 Z" fill="#14203a"/><path d="M 408.8 160.0 L 412.0 155.2 L 417.8 155.6 L 418.2 161.0 L 413.0 164.4 L 409.2 163.6 Z" fill="#5a4418"/><path d="M 410.0 159.8 L 412.6 156.2 L 416.8 156.6 L 417.0 160.4 L 412.8 163.0 Z" fill="#cc9c34"/><path d="M 441.2 159.2 L 447.0 158.8 L 450.2 163.0 L 449.6 167.2 L 445.0 167.2 L 441.6 163.0 Z" fill="#5a4418"/><path d="M 442.4 160.0 L 446.6 159.8 L 449.0 163.2 L 448.4 166.0 L 445.2 166.0 Z" fill="#cc9c34"/><path d="M 419.8 99.4 L 438.1 99.4 L 440.9 110.0 L 416.1 110.0 Z" fill="#1c2a5e"/><path d="M 416.0 110.0 L 443.0 110.0 L 447.2 130.5 L 411.4 130.5 Z" fill="#1c2a5e"/><path d="M 421.0 111.0 L 418.0 129.0 M 428.0 111.0 L 427.0 130.0 M 435.0 111.0 L 437.0 130.0 M 440.0 111.0 L 443.0 129.0" stroke="#2c3c78" stroke-width="1.0" stroke-linecap="butt" stroke-linejoin="round" fill="none"/><path d="M 411.6 129.6 L 447.0 129.2 L 446.6 133.6 L 438.0 134.6 L 437.0 136.6 L 422.0 136.6 L 421.2 134.6 L 412.2 134.0 Z" fill="#6878a8"/><path d="M 422.0 132.2 L 437.0 132.0 L 436.8 136.2 L 422.4 136.2 Z" fill="#b0b8d8"/><path d="M 413.3 82.0 L 419.0 84.0 L 417.0 91.2 L 406.0 94.1 L 404.2 90.3 Z" fill="#d8a070"/><path d="M 404.9 88.6 L 413.0 86.6 L 414.6 91.2 L 406.4 94.5 Z" fill="#2a3a6a"/><path d="M 399.0 91.2 L 401.4 89.2 L 405.3 89.9 L 405.6 95.2 L 401.4 97.1 L 399.2 94.9 Z" fill="#4a3020"/><path d="M 400.1 91.4 L 402.0 90.1 L 404.5 90.6 L 404.7 94.5 L 401.6 96.0 Z" fill="#d09468"/><path d="M 438.1 90.3 L 445.0 87.2 L 452.1 100.4 L 447.7 102.4 Z" fill="#26262e"/><path d="M 447.8 100.9 L 451.9 100.0 L 452.8 105.9 L 450.6 109.0 L 448.2 106.8 Z" fill="#c8a070"/><path d="M 414.6 70.1 L 421.8 65.3 L 423.6 68.4 L 421.8 81.3 L 413.0 83.1 Z" fill="#f0d4b4"/><path d="M 412.6 80.4 L 421.2 79.8 L 420.9 84.6 L 412.2 85.0 Z" fill="#dc6450"/><path d="M 435.2 65.3 L 442.9 71.0 L 445.3 86.8 L 438.1 90.5 L 436.3 78.3 Z" fill="#c8b8e0"/><path d="M 437.0 82.9 L 445.1 82.0 L 445.3 86.8 L 438.1 90.5 Z" fill="#e0a0a8"/><path d="M 421.4 65.5 L 437.4 65.5 L 438.1 86.6 L 421.6 86.6 Z" fill="#d84848"/><path d="M 422.2 64.4 L 435.9 64.4 L 430.8 82.0 L 428.6 82.0 Z" fill="#1c2c6c"/><path d="M 426.2 64.4 L 432.2 64.4 L 429.5 78.7 Z" fill="#e8d080"/><path d="M 427.1 64.4 L 431.3 64.4 L 429.3 70.1 Z" fill="#6a7ab0"/><path d="M 422.3 85.3 L 436.8 85.3 L 437.0 87.5 L 422.3 87.5 Z" fill="#e8c4c4"/><path d="M 422.3 87.3 L 437.4 87.3 L 437.6 91.9 L 422.5 91.9 Z" fill="#2a2a4a"/><path d="M 422.7 91.7 L 436.8 91.7 L 436.7 93.2 L 422.9 93.2 Z" fill="#f0e0e0"/><path d="M 421.8 93.0 L 437.8 93.0 L 438.9 107.7 L 419.6 107.7 Z" fill="#d84c44"/><path d="M 424.2 93.2 L 434.6 93.2 L 429.5 99.4 Z" fill="#3848b0"/><path d="M 425.3 99.4 L 433.5 99.4 L 434.4 107.7 L 424.4 107.7 Z" fill="#1c2a5e"/><path d="M 430.2 103.9 L 432.8 103.9 L 432.6 108.8 L 430.4 108.8 Z" fill="#f0e8e0"/><path d="M 434.1 104.0 L 436.8 104.0 L 436.8 109.7 L 434.3 109.5 Z" fill="#f0e8e0"/></svg>
<div class="a" id="hsb"></div>
<svg class="a" style="left:398px;top:563px" width="395" height="14" viewBox="0 0 395 14"><path d="M8.5 4.5 L5.5 7 L8.5 9.5Z" fill="#444"/><defs><linearGradient id="th" x1="0" y1="0" x2="0" y2="1"><stop offset="0" stop-color="#f6f6f6"/><stop offset=".5" stop-color="#e6e6e6"/><stop offset=".55" stop-color="#d6d6d6"/><stop offset="1" stop-color="#dedede"/></linearGradient></defs><rect x="13.5" y="1.5" width="266" height="11" rx="2" fill="url(#th)" stroke="#9c9c9c" stroke-width="1"/><path d="M144.5 4.5 L144.5 9.5 M146.5 4.5 L146.5 9.5 M148.5 4.5 L148.5 9.5" stroke="#666" stroke-width="1"/></svg>
<div class="a" id="status"></div>
<div class="a sp" style="left:5px;width:87px">编号<span class="l">: 80/5551</span></div>
<div class="a sp" style="left:93px;width:128px">格式<span class="l">: MIR2 </span>标准压缩格式</div>
<div class="a sp" style="left:222px;width:74px">规格<span class="l">: 80 * 127</span></div>
<div class="a sp" style="left:297px;width:54px">坐标<span class="l">X: 49</span></div>
<div class="a sp" style="left:352px;width:53px">坐标<span class="l">Y: 21</span></div>
<div class="a sp" style="left:405.5px;width:62px">格式<span class="l">: </span>默认</div>
<div class="a sp" style="left:469px;width:61px">透明度<span class="l">: 255</span></div>
<div class="a sp" style="left:531.5px;width:262px">测试<span class="l">: (0,0)</span></div>
<svg class="a" style="left:783px;top:584px" width="10" height="10" viewBox="0 0 10 10"><path d="M9.5 1 L1 9.5 M9.5 4 L4 9.5 M9.5 7 L7 9.5" stroke="#b4b4b4" stroke-width="1"/></svg>
<div class="a" id="wm">蓝宇传奇技术论坛</div>
</body></html>
